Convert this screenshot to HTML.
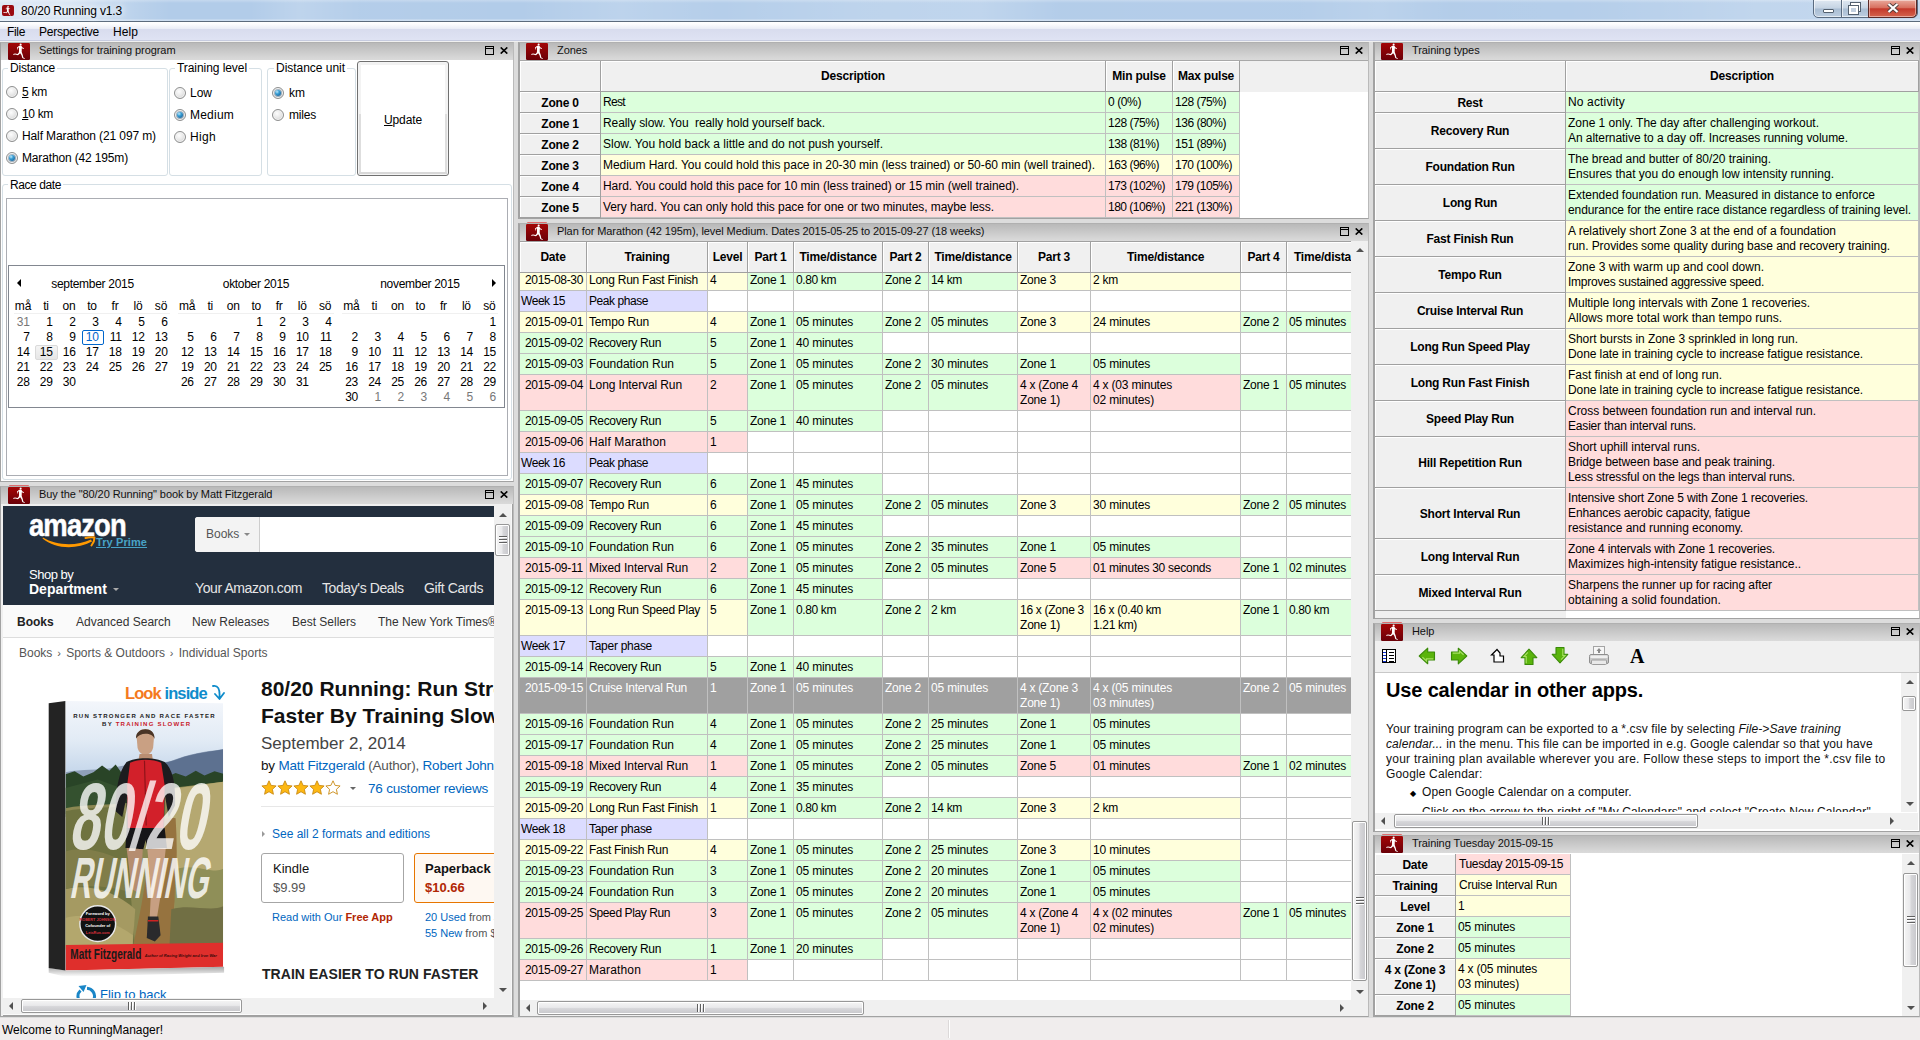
<!DOCTYPE html>
<html lang="en"><head><meta charset="utf-8"><title>80/20 Running v1.3</title>
<style>
*{box-sizing:border-box;margin:0;padding:0}
html,body{width:1920px;height:1040px;overflow:hidden}
body{position:relative;background:#dcdcdc;font-family:"Liberation Sans",sans-serif;font-size:12px;color:#000}
div,span,svg{position:absolute}
span{white-space:pre}
.s{font-size:12px;letter-spacing:-.12px}
.b{font-size:12px;font-weight:bold;letter-spacing:-.2px}
.a{font-size:11px;letter-spacing:-.08px;color:#111}
.pnl{background:#fff;border:1px solid #a2a2a2;border-top-color:#b0b0b0;border-right-color:#bababa;overflow:hidden}
.hd{left:0;top:0;right:0;height:17px;background:linear-gradient(#b9b9b9 0,#c3c3c3 30%,#d6d6d6 85%,#dadada 100%)}
.th{background:#f0f0f0;border-right:1px solid #a0a0a0;border-bottom:1px solid #a0a0a0;box-shadow:inset 1px 1px 0 #fff}
.c{border-right:1px solid #c0c0c0;border-bottom:1px solid #c0c0c0;background:#fff;overflow:hidden}
.G{background:#dcffdc}.Y{background:#ffffdc}.P{background:#ffdcdc}.L{background:#dcdcff}.W{background:#fff}
.X{background:#a0a0a0;color:#fff}
.ct{left:0;right:0;text-align:center}
.sb{background:#f0f0f0}
.thumb{border:1px solid #979797;border-radius:2px;background:linear-gradient(90deg,#f5f5f5 0,#e9e9eb 45%,#d6d6d9 55%,#c7c7cb 100%);box-shadow:inset 0 0 0 1px #fff}
.thumbh{border:1px solid #979797;border-radius:2px;background:linear-gradient(#f5f5f5 0,#e9e9eb 45%,#d6d6d9 55%,#c7c7cb 100%);box-shadow:inset 0 0 0 1px #fff}
.tri{width:0;height:0}
</style></head>
<body>
<div style="left:0px;top:0px;width:1920px;height:21px;background:#b2cce9"></div>
<div style="left:0px;top:0px;width:1920px;height:21px;background:linear-gradient(90deg,rgba(255,255,255,.55) 0,rgba(255,255,255,.5) 70px,rgba(255,255,255,.12) 135px,rgba(255,255,255,0) 170px,rgba(255,255,255,0) 250px,rgba(255,255,255,.16) 300px,rgba(255,255,255,.03) 360px,rgba(255,255,255,0) 520px,rgba(255,255,255,.14) 620px,rgba(255,255,255,.04) 720px,rgba(255,255,255,.15) 860px,rgba(255,255,255,.18) 980px,rgba(255,255,255,.02) 1060px,rgba(255,255,255,.03) 1300px,rgba(255,255,255,.12) 1380px,rgba(255,255,255,.02) 1450px,rgba(255,255,255,.05) 1600px,rgba(255,255,255,.2) 1760px,rgba(255,255,255,.22) 1920px)"></div>
<div style="left:0px;top:0px;width:1920px;height:3px;background:linear-gradient(rgba(255,255,255,.25),rgba(255,255,255,0))"></div>
<div style="left:0px;top:19px;width:1920px;height:2px;background:linear-gradient(rgba(255,255,255,.15),rgba(255,255,255,.4))"></div>
<div style="left:0px;top:21px;width:1920px;height:1px;background:#5c6b7c"></div><svg style="left:2px;top:5px" width="12" height="11" viewBox="0 0 12 11"><rect width="12" height="11" rx="2" fill="#9a0a10"/><g transform="translate(-1.800 .6) scale(.62)" fill="#fff"><circle cx="12.65" cy="1.5" r="1.2"/><path d="M12 2.500L10.600 3.200L9 4.600L9.300 6.600L9.900 6.500L9.800 5L10.900 4.200L11 8L10.800 9.400L9.600 11L7 10.400L5.200 10.900L5 11.600L5.800 11.800L7.200 11.400L10 12.200L12.200 10.200L13.500 12.200L14.300 14.900L16.600 15.900L16.800 15.200L15.300 14.400L14.800 12L13.700 9L13.800 5.200L15.800 5.900L16 5.200L14.200 4.200L13.600 3L13 2.500Z"/></g></svg><span class="s" style="left:21px;top:2.5px;line-height:16px;letter-spacing:-0.171px;text-shadow:0 0 6px #fff,0 0 10px #fff">80/20 Running v1.3</span>
<div style="left:1813px;top:-1px;width:105px;height:19px;border:1px solid #5a6b80;border-radius:0 0 5px 5px;background:linear-gradient(#dfe8f2 0,#c5d3e3 48%,#a9bdd3 52%,#bccde0 100%);box-shadow:inset 0 0 0 1px rgba(255,255,255,.6)"></div>
<div style="left:1841px;top:-1px;width:1px;height:18px;background:#5a6b80"></div>
<div style="left:1842px;top:0px;width:1px;height:17px;background:rgba(255,255,255,.6)"></div>
<div style="left:1868px;top:-1px;width:49px;height:19px;border:1px solid #5a2a28;border-radius:0 0 5px 0;background:linear-gradient(#e9a99c 0,#d8705f 45%,#c4392b 52%,#d4644e 100%);box-shadow:inset 0 0 0 1px rgba(255,255,255,.45)"></div>
<div style="left:1823px;top:9px;width:11px;height:4px;background:#fff;border:1px solid #53606f;border-radius:1px"></div>
<div style="left:1851px;top:3px;width:9px;height:8px;border:2px solid #fff;outline:1px solid #53606f;background:transparent"></div>
<div style="left:1849px;top:6px;width:9px;height:8px;border:2px solid #fff;outline:1px solid #53606f;background:#c3d0e0"></div><svg style="left:1887px;top:3px" width="12" height="10" viewBox="0 0 12 10"><path d="M1.500 1L10.500 9M10.500 1L1.500 9" stroke="#53413f" stroke-width="4" fill="none"/><path d="M1.500 1L10.500 9M10.500 1L1.500 9" stroke="#fff" stroke-width="2.200" fill="none"/></svg>
<div style="left:0px;top:22px;width:1920px;height:7px;background:linear-gradient(#fff 0,#fdfdfe 25%,#e9ecf6 100%)"></div>
<div style="left:0px;top:29px;width:1920px;height:11px;background:linear-gradient(#d8dcee,#dfe3f3)"></div>
<div style="left:0px;top:40px;width:1920px;height:1px;background:#c6cbdf"></div>
<div style="left:0px;top:41px;width:1920px;height:1px;background:#f0f0f0"></div><span class="s" style="left:7px;top:24px;line-height:16px;letter-spacing:-0.334px;">File</span><span class="s" style="left:39px;top:24px;line-height:16px;letter-spacing:-0.245px;">Perspective</span><span class="s" style="left:113px;top:24px;line-height:16px;letter-spacing:0.08px;">Help</span>
<div style="left:0px;top:1018px;width:1920px;height:22px;background:#f0eded"></div><span class="s" style="left:2px;top:1022px;line-height:16px;letter-spacing:-0.033px;">Welcome to RunningManager!</span>
<div style="left:948px;top:1020px;width:1px;height:18px;background:#dcd9d9"></div>
<div style="left:949px;top:1020px;width:1px;height:18px;background:#fff"></div>
<div class="pnl" style="left:0px;top:42px;width:514px;height:440px;border-left-width:1px">
<div class="hd"></div>
<div style="left:484px;top:3px;width:9px;height:9px;border:1px solid #000"></div>
<div style="left:484px;top:5px;width:9px;height:1px;background:#000"></div><svg style="left:499px;top:4px" width="8" height="7" viewBox="0 0 8 7"><path d="M.7 .4L7.3 6.6M7.3 .4L.7 6.6" stroke="#000" stroke-width="1.6" fill="none"/></svg><span class="a" style="left:38px;top:-1px;line-height:16px;">Settings for training program</span>
<div style="left:-1px;top:-43px;width:1920px;height:1040px">
<div style="left:2px;top:68px;width:166px;height:108px;border:1px solid #d5dfe5;border-radius:3px"></div><span class="s" style="left:10px;top:60px;line-height:16px;letter-spacing:-0.211px;background:linear-gradient(transparent 7px,#fff 7px,#fff 10px,transparent 10px);padding:0 2px;margin-left:-2px">Distance</span>
<div style="left:169px;top:68px;width:93px;height:108px;border:1px solid #d5dfe5;border-radius:3px"></div><span class="s" style="left:177px;top:60px;line-height:16px;letter-spacing:-0.066px;background:linear-gradient(transparent 7px,#fff 7px,#fff 10px,transparent 10px);padding:0 2px;margin-left:-2px">Training level</span>
<div style="left:267px;top:68px;width:89px;height:108px;border:1px solid #d5dfe5;border-radius:3px"></div><span class="s" style="left:276px;top:60px;line-height:16px;letter-spacing:-0.028px;background:linear-gradient(transparent 7px,#fff 7px,#fff 10px,transparent 10px);padding:0 2px;margin-left:-2px">Distance unit</span>
<div style="left:6px;top:86px;width:12px;height:12px;border-radius:50%;border:1px solid #8e8f8f;background:radial-gradient(circle at 40% 35%,#fdfdfd 0,#e9e9e9 45%,#c9c9c9 100%);box-shadow:inset 0 0 0 1px #f4f4f4"></div><span class="s" style="left:22px;top:84px;line-height:16px;letter-spacing:-0.251px;"><u>5</u> km</span>
<div style="left:6px;top:108px;width:12px;height:12px;border-radius:50%;border:1px solid #8e8f8f;background:radial-gradient(circle at 40% 35%,#fdfdfd 0,#e9e9e9 45%,#c9c9c9 100%);box-shadow:inset 0 0 0 1px #f4f4f4"></div><span class="s" style="left:22px;top:106px;line-height:16px;letter-spacing:-0.336px;"><u>1</u>0 km</span>
<div style="left:6px;top:130px;width:12px;height:12px;border-radius:50%;border:1px solid #8e8f8f;background:radial-gradient(circle at 40% 35%,#fdfdfd 0,#e9e9e9 45%,#c9c9c9 100%);box-shadow:inset 0 0 0 1px #f4f4f4"></div><span class="s" style="left:22px;top:128px;line-height:16px;letter-spacing:-0.114px;">Half Marathon (21 097 m)</span>
<div style="left:6px;top:152px;width:12px;height:12px;border-radius:50%;border:1px solid #8e8f8f;background:radial-gradient(circle at 40% 35%,#fdfdfd 0,#e9e9e9 45%,#c9c9c9 100%);box-shadow:inset 0 0 0 1px #f4f4f4"></div>
<div style="left:9px;top:155px;width:6px;height:6px;border-radius:50%;background:radial-gradient(circle at 35% 30%,#bfe9fb 0,#3aa0d6 35%,#0f4f86 100%);box-shadow:0 0 0 1px rgba(20,70,110,.35)"></div><span class="s" style="left:22px;top:150px;line-height:16px;letter-spacing:-0.151px;">Marathon (42 195m)</span>
<div style="left:174px;top:87px;width:12px;height:12px;border-radius:50%;border:1px solid #8e8f8f;background:radial-gradient(circle at 40% 35%,#fdfdfd 0,#e9e9e9 45%,#c9c9c9 100%);box-shadow:inset 0 0 0 1px #f4f4f4"></div><span class="s" style="left:190px;top:85px;line-height:16px;letter-spacing:-0.004px;">Low</span>
<div style="left:174px;top:109px;width:12px;height:12px;border-radius:50%;border:1px solid #8e8f8f;background:radial-gradient(circle at 40% 35%,#fdfdfd 0,#e9e9e9 45%,#c9c9c9 100%);box-shadow:inset 0 0 0 1px #f4f4f4"></div>
<div style="left:177px;top:112px;width:6px;height:6px;border-radius:50%;background:radial-gradient(circle at 35% 30%,#bfe9fb 0,#3aa0d6 35%,#0f4f86 100%);box-shadow:0 0 0 1px rgba(20,70,110,.35)"></div><span class="s" style="left:190px;top:107px;line-height:16px;letter-spacing:0.22px;">Medium</span>
<div style="left:174px;top:131px;width:12px;height:12px;border-radius:50%;border:1px solid #8e8f8f;background:radial-gradient(circle at 40% 35%,#fdfdfd 0,#e9e9e9 45%,#c9c9c9 100%);box-shadow:inset 0 0 0 1px #f4f4f4"></div><span class="s" style="left:190px;top:129px;line-height:16px;letter-spacing:0.33px;">High</span>
<div style="left:272px;top:87px;width:12px;height:12px;border-radius:50%;border:1px solid #8e8f8f;background:radial-gradient(circle at 40% 35%,#fdfdfd 0,#e9e9e9 45%,#c9c9c9 100%);box-shadow:inset 0 0 0 1px #f4f4f4"></div>
<div style="left:275px;top:90px;width:6px;height:6px;border-radius:50%;background:radial-gradient(circle at 35% 30%,#bfe9fb 0,#3aa0d6 35%,#0f4f86 100%);box-shadow:0 0 0 1px rgba(20,70,110,.35)"></div><span class="s" style="left:289px;top:85px;line-height:16px;letter-spacing:0.002px;">km</span>
<div style="left:272px;top:109px;width:12px;height:12px;border-radius:50%;border:1px solid #8e8f8f;background:radial-gradient(circle at 40% 35%,#fdfdfd 0,#e9e9e9 45%,#c9c9c9 100%);box-shadow:inset 0 0 0 1px #f4f4f4"></div><span class="s" style="left:289px;top:107px;line-height:16px;letter-spacing:-0.2px;">miles</span>
<div style="left:357px;top:61px;width:92px;height:115px;border:1px solid #707070;border-radius:3px;background:#fff;box-shadow:inset 0 0 0 1px #f4f4f4"></div>
<div style="left:359px;top:114px;width:2px;height:60px;background:#dedede"></div>
<div style="left:445px;top:114px;width:2px;height:60px;background:#dedede"></div>
<div style="left:359px;top:172px;width:88px;height:2px;background:#d8d8d8"></div>
<div style="left:359px;top:63px;width:88px;height:2px;background:#f2f2f2"></div>
<div style="left:359px;top:65px;width:2px;height:49px;background:#f3f3f3"></div>
<div style="left:445px;top:65px;width:2px;height:49px;background:#f3f3f3"></div><span class="s" style="left:384px;top:111.5px;line-height:16px;letter-spacing:-0.116px;"><u>U</u>pdate</span>
<div style="left:2px;top:184px;width:510px;height:296px;border:1px solid #d5dfe5;border-radius:3px"></div><span class="s" style="left:10px;top:177px;line-height:16px;letter-spacing:-0.411px;background:linear-gradient(transparent 7px,#fff 7px,#fff 10px,transparent 10px);padding:0 2px;margin-left:-2px">Race date</span>
<div style="left:6px;top:198px;width:502px;height:278px;border:1px solid #abadb3;background:#fff"></div>
<div style="left:8px;top:265px;width:497px;height:143px;border:1px solid #828790;background:#fff"></div>
<div class="tri" style="left:17.0px;top:279px;border-top:4px solid transparent;border-bottom:4px solid transparent;border-right:4px solid #000"></div>
<div class="tri" style="left:492.0px;top:279px;border-top:4px solid transparent;border-bottom:4px solid transparent;border-left:4px solid #000"></div><span class="s" style="left:32.5px;top:276px;width:120px;text-align:center;line-height:16px;letter-spacing:-.3px">september 2015</span>
<div style="left:13.5px;top:313px;width:156px;height:1px;background:#f0f0f0"></div><span class="s" style="left:11.5px;top:298px;width:23px;text-align:center;line-height:16px;letter-spacing:-.2px">må</span><span class="s" style="left:34.5px;top:298px;width:23px;text-align:center;line-height:16px;letter-spacing:-.2px">ti</span><span class="s" style="left:57.5px;top:298px;width:23px;text-align:center;line-height:16px;letter-spacing:-.2px">on</span><span class="s" style="left:80.5px;top:298px;width:23px;text-align:center;line-height:16px;letter-spacing:-.2px">to</span><span class="s" style="left:103.5px;top:298px;width:23px;text-align:center;line-height:16px;letter-spacing:-.2px">fr</span><span class="s" style="left:126.5px;top:298px;width:23px;text-align:center;line-height:16px;letter-spacing:-.2px">lö</span><span class="s" style="left:149.5px;top:298px;width:23px;text-align:center;line-height:16px;letter-spacing:-.2px">sö</span><span class="s" style="left:6.5px;top:314px;width:23px;text-align:right;line-height:16px;letter-spacing:-.35px;color:#777">31</span><span class="s" style="left:29.5px;top:314px;width:23px;text-align:right;line-height:16px;letter-spacing:-.35px;color:#000">1</span><span class="s" style="left:52.5px;top:314px;width:23px;text-align:right;line-height:16px;letter-spacing:-.35px;color:#000">2</span><span class="s" style="left:75.5px;top:314px;width:23px;text-align:right;line-height:16px;letter-spacing:-.35px;color:#000">3</span><span class="s" style="left:98.5px;top:314px;width:23px;text-align:right;line-height:16px;letter-spacing:-.35px;color:#000">4</span><span class="s" style="left:121.5px;top:314px;width:23px;text-align:right;line-height:16px;letter-spacing:-.35px;color:#000">5</span><span class="s" style="left:144.5px;top:314px;width:23px;text-align:right;line-height:16px;letter-spacing:-.35px;color:#000">6</span><span class="s" style="left:6.5px;top:329px;width:23px;text-align:right;line-height:16px;letter-spacing:-.35px;color:#000">7</span><span class="s" style="left:29.5px;top:329px;width:23px;text-align:right;line-height:16px;letter-spacing:-.35px;color:#000">8</span><span class="s" style="left:52.5px;top:329px;width:23px;text-align:right;line-height:16px;letter-spacing:-.35px;color:#000">9</span>
<div style="left:81.5px;top:329.5px;width:22px;height:15px;border:1px solid #0066cc;border-radius:2px"></div><span class="s" style="left:75.5px;top:329px;width:23px;text-align:right;line-height:16px;letter-spacing:-.35px;color:#0066cc">10</span><span class="s" style="left:98.5px;top:329px;width:23px;text-align:right;line-height:16px;letter-spacing:-.35px;color:#000">11</span><span class="s" style="left:121.5px;top:329px;width:23px;text-align:right;line-height:16px;letter-spacing:-.35px;color:#000">12</span><span class="s" style="left:144.5px;top:329px;width:23px;text-align:right;line-height:16px;letter-spacing:-.35px;color:#000">13</span><span class="s" style="left:6.5px;top:344px;width:23px;text-align:right;line-height:16px;letter-spacing:-.35px;color:#000">14</span>
<div style="left:34.5px;top:344.5px;width:23px;height:15px;border:1px solid #dadada;border-radius:2px;background:linear-gradient(#f4f4f4,#e6e6e6)"></div><span class="s" style="left:29.5px;top:344px;width:23px;text-align:right;line-height:16px;letter-spacing:-.35px;color:#000">15</span><span class="s" style="left:52.5px;top:344px;width:23px;text-align:right;line-height:16px;letter-spacing:-.35px;color:#000">16</span><span class="s" style="left:75.5px;top:344px;width:23px;text-align:right;line-height:16px;letter-spacing:-.35px;color:#000">17</span><span class="s" style="left:98.5px;top:344px;width:23px;text-align:right;line-height:16px;letter-spacing:-.35px;color:#000">18</span><span class="s" style="left:121.5px;top:344px;width:23px;text-align:right;line-height:16px;letter-spacing:-.35px;color:#000">19</span><span class="s" style="left:144.5px;top:344px;width:23px;text-align:right;line-height:16px;letter-spacing:-.35px;color:#000">20</span><span class="s" style="left:6.5px;top:359px;width:23px;text-align:right;line-height:16px;letter-spacing:-.35px;color:#000">21</span><span class="s" style="left:29.5px;top:359px;width:23px;text-align:right;line-height:16px;letter-spacing:-.35px;color:#000">22</span><span class="s" style="left:52.5px;top:359px;width:23px;text-align:right;line-height:16px;letter-spacing:-.35px;color:#000">23</span><span class="s" style="left:75.5px;top:359px;width:23px;text-align:right;line-height:16px;letter-spacing:-.35px;color:#000">24</span><span class="s" style="left:98.5px;top:359px;width:23px;text-align:right;line-height:16px;letter-spacing:-.35px;color:#000">25</span><span class="s" style="left:121.5px;top:359px;width:23px;text-align:right;line-height:16px;letter-spacing:-.35px;color:#000">26</span><span class="s" style="left:144.5px;top:359px;width:23px;text-align:right;line-height:16px;letter-spacing:-.35px;color:#000">27</span><span class="s" style="left:6.5px;top:374px;width:23px;text-align:right;line-height:16px;letter-spacing:-.35px;color:#000">28</span><span class="s" style="left:29.5px;top:374px;width:23px;text-align:right;line-height:16px;letter-spacing:-.35px;color:#000">29</span><span class="s" style="left:52.5px;top:374px;width:23px;text-align:right;line-height:16px;letter-spacing:-.35px;color:#000">30</span><span class="s" style="left:196px;top:276px;width:120px;text-align:center;line-height:16px;letter-spacing:-.3px">oktober 2015</span>
<div style="left:177.7px;top:313px;width:156px;height:1px;background:#f0f0f0"></div><span class="s" style="left:175.7px;top:298px;width:23px;text-align:center;line-height:16px;letter-spacing:-.2px">må</span><span class="s" style="left:198.7px;top:298px;width:23px;text-align:center;line-height:16px;letter-spacing:-.2px">ti</span><span class="s" style="left:221.7px;top:298px;width:23px;text-align:center;line-height:16px;letter-spacing:-.2px">on</span><span class="s" style="left:244.7px;top:298px;width:23px;text-align:center;line-height:16px;letter-spacing:-.2px">to</span><span class="s" style="left:267.7px;top:298px;width:23px;text-align:center;line-height:16px;letter-spacing:-.2px">fr</span><span class="s" style="left:290.7px;top:298px;width:23px;text-align:center;line-height:16px;letter-spacing:-.2px">lö</span><span class="s" style="left:313.7px;top:298px;width:23px;text-align:center;line-height:16px;letter-spacing:-.2px">sö</span><span class="s" style="left:239.7px;top:314px;width:23px;text-align:right;line-height:16px;letter-spacing:-.35px;color:#000">1</span><span class="s" style="left:262.7px;top:314px;width:23px;text-align:right;line-height:16px;letter-spacing:-.35px;color:#000">2</span><span class="s" style="left:285.7px;top:314px;width:23px;text-align:right;line-height:16px;letter-spacing:-.35px;color:#000">3</span><span class="s" style="left:308.7px;top:314px;width:23px;text-align:right;line-height:16px;letter-spacing:-.35px;color:#000">4</span><span class="s" style="left:170.7px;top:329px;width:23px;text-align:right;line-height:16px;letter-spacing:-.35px;color:#000">5</span><span class="s" style="left:193.7px;top:329px;width:23px;text-align:right;line-height:16px;letter-spacing:-.35px;color:#000">6</span><span class="s" style="left:216.7px;top:329px;width:23px;text-align:right;line-height:16px;letter-spacing:-.35px;color:#000">7</span><span class="s" style="left:239.7px;top:329px;width:23px;text-align:right;line-height:16px;letter-spacing:-.35px;color:#000">8</span><span class="s" style="left:262.7px;top:329px;width:23px;text-align:right;line-height:16px;letter-spacing:-.35px;color:#000">9</span><span class="s" style="left:285.7px;top:329px;width:23px;text-align:right;line-height:16px;letter-spacing:-.35px;color:#000">10</span><span class="s" style="left:308.7px;top:329px;width:23px;text-align:right;line-height:16px;letter-spacing:-.35px;color:#000">11</span><span class="s" style="left:170.7px;top:344px;width:23px;text-align:right;line-height:16px;letter-spacing:-.35px;color:#000">12</span><span class="s" style="left:193.7px;top:344px;width:23px;text-align:right;line-height:16px;letter-spacing:-.35px;color:#000">13</span><span class="s" style="left:216.7px;top:344px;width:23px;text-align:right;line-height:16px;letter-spacing:-.35px;color:#000">14</span><span class="s" style="left:239.7px;top:344px;width:23px;text-align:right;line-height:16px;letter-spacing:-.35px;color:#000">15</span><span class="s" style="left:262.7px;top:344px;width:23px;text-align:right;line-height:16px;letter-spacing:-.35px;color:#000">16</span><span class="s" style="left:285.7px;top:344px;width:23px;text-align:right;line-height:16px;letter-spacing:-.35px;color:#000">17</span><span class="s" style="left:308.7px;top:344px;width:23px;text-align:right;line-height:16px;letter-spacing:-.35px;color:#000">18</span><span class="s" style="left:170.7px;top:359px;width:23px;text-align:right;line-height:16px;letter-spacing:-.35px;color:#000">19</span><span class="s" style="left:193.7px;top:359px;width:23px;text-align:right;line-height:16px;letter-spacing:-.35px;color:#000">20</span><span class="s" style="left:216.7px;top:359px;width:23px;text-align:right;line-height:16px;letter-spacing:-.35px;color:#000">21</span><span class="s" style="left:239.7px;top:359px;width:23px;text-align:right;line-height:16px;letter-spacing:-.35px;color:#000">22</span><span class="s" style="left:262.7px;top:359px;width:23px;text-align:right;line-height:16px;letter-spacing:-.35px;color:#000">23</span><span class="s" style="left:285.7px;top:359px;width:23px;text-align:right;line-height:16px;letter-spacing:-.35px;color:#000">24</span><span class="s" style="left:308.7px;top:359px;width:23px;text-align:right;line-height:16px;letter-spacing:-.35px;color:#000">25</span><span class="s" style="left:170.7px;top:374px;width:23px;text-align:right;line-height:16px;letter-spacing:-.35px;color:#000">26</span><span class="s" style="left:193.7px;top:374px;width:23px;text-align:right;line-height:16px;letter-spacing:-.35px;color:#000">27</span><span class="s" style="left:216.7px;top:374px;width:23px;text-align:right;line-height:16px;letter-spacing:-.35px;color:#000">28</span><span class="s" style="left:239.7px;top:374px;width:23px;text-align:right;line-height:16px;letter-spacing:-.35px;color:#000">29</span><span class="s" style="left:262.7px;top:374px;width:23px;text-align:right;line-height:16px;letter-spacing:-.35px;color:#000">30</span><span class="s" style="left:285.7px;top:374px;width:23px;text-align:right;line-height:16px;letter-spacing:-.35px;color:#000">31</span><span class="s" style="left:360px;top:276px;width:120px;text-align:center;line-height:16px;letter-spacing:-.3px">november 2015</span>
<div style="left:341.9px;top:313px;width:156px;height:1px;background:#f0f0f0"></div><span class="s" style="left:339.9px;top:298px;width:23px;text-align:center;line-height:16px;letter-spacing:-.2px">må</span><span class="s" style="left:362.9px;top:298px;width:23px;text-align:center;line-height:16px;letter-spacing:-.2px">ti</span><span class="s" style="left:385.9px;top:298px;width:23px;text-align:center;line-height:16px;letter-spacing:-.2px">on</span><span class="s" style="left:408.9px;top:298px;width:23px;text-align:center;line-height:16px;letter-spacing:-.2px">to</span><span class="s" style="left:431.9px;top:298px;width:23px;text-align:center;line-height:16px;letter-spacing:-.2px">fr</span><span class="s" style="left:454.9px;top:298px;width:23px;text-align:center;line-height:16px;letter-spacing:-.2px">lö</span><span class="s" style="left:477.9px;top:298px;width:23px;text-align:center;line-height:16px;letter-spacing:-.2px">sö</span><span class="s" style="left:472.9px;top:314px;width:23px;text-align:right;line-height:16px;letter-spacing:-.35px;color:#000">1</span><span class="s" style="left:334.9px;top:329px;width:23px;text-align:right;line-height:16px;letter-spacing:-.35px;color:#000">2</span><span class="s" style="left:357.9px;top:329px;width:23px;text-align:right;line-height:16px;letter-spacing:-.35px;color:#000">3</span><span class="s" style="left:380.9px;top:329px;width:23px;text-align:right;line-height:16px;letter-spacing:-.35px;color:#000">4</span><span class="s" style="left:403.9px;top:329px;width:23px;text-align:right;line-height:16px;letter-spacing:-.35px;color:#000">5</span><span class="s" style="left:426.9px;top:329px;width:23px;text-align:right;line-height:16px;letter-spacing:-.35px;color:#000">6</span><span class="s" style="left:449.9px;top:329px;width:23px;text-align:right;line-height:16px;letter-spacing:-.35px;color:#000">7</span><span class="s" style="left:472.9px;top:329px;width:23px;text-align:right;line-height:16px;letter-spacing:-.35px;color:#000">8</span><span class="s" style="left:334.9px;top:344px;width:23px;text-align:right;line-height:16px;letter-spacing:-.35px;color:#000">9</span><span class="s" style="left:357.9px;top:344px;width:23px;text-align:right;line-height:16px;letter-spacing:-.35px;color:#000">10</span><span class="s" style="left:380.9px;top:344px;width:23px;text-align:right;line-height:16px;letter-spacing:-.35px;color:#000">11</span><span class="s" style="left:403.9px;top:344px;width:23px;text-align:right;line-height:16px;letter-spacing:-.35px;color:#000">12</span><span class="s" style="left:426.9px;top:344px;width:23px;text-align:right;line-height:16px;letter-spacing:-.35px;color:#000">13</span><span class="s" style="left:449.9px;top:344px;width:23px;text-align:right;line-height:16px;letter-spacing:-.35px;color:#000">14</span><span class="s" style="left:472.9px;top:344px;width:23px;text-align:right;line-height:16px;letter-spacing:-.35px;color:#000">15</span><span class="s" style="left:334.9px;top:359px;width:23px;text-align:right;line-height:16px;letter-spacing:-.35px;color:#000">16</span><span class="s" style="left:357.9px;top:359px;width:23px;text-align:right;line-height:16px;letter-spacing:-.35px;color:#000">17</span><span class="s" style="left:380.9px;top:359px;width:23px;text-align:right;line-height:16px;letter-spacing:-.35px;color:#000">18</span><span class="s" style="left:403.9px;top:359px;width:23px;text-align:right;line-height:16px;letter-spacing:-.35px;color:#000">19</span><span class="s" style="left:426.9px;top:359px;width:23px;text-align:right;line-height:16px;letter-spacing:-.35px;color:#000">20</span><span class="s" style="left:449.9px;top:359px;width:23px;text-align:right;line-height:16px;letter-spacing:-.35px;color:#000">21</span><span class="s" style="left:472.9px;top:359px;width:23px;text-align:right;line-height:16px;letter-spacing:-.35px;color:#000">22</span><span class="s" style="left:334.9px;top:374px;width:23px;text-align:right;line-height:16px;letter-spacing:-.35px;color:#000">23</span><span class="s" style="left:357.9px;top:374px;width:23px;text-align:right;line-height:16px;letter-spacing:-.35px;color:#000">24</span><span class="s" style="left:380.9px;top:374px;width:23px;text-align:right;line-height:16px;letter-spacing:-.35px;color:#000">25</span><span class="s" style="left:403.9px;top:374px;width:23px;text-align:right;line-height:16px;letter-spacing:-.35px;color:#000">26</span><span class="s" style="left:426.9px;top:374px;width:23px;text-align:right;line-height:16px;letter-spacing:-.35px;color:#000">27</span><span class="s" style="left:449.9px;top:374px;width:23px;text-align:right;line-height:16px;letter-spacing:-.35px;color:#000">28</span><span class="s" style="left:472.9px;top:374px;width:23px;text-align:right;line-height:16px;letter-spacing:-.35px;color:#000">29</span><span class="s" style="left:334.9px;top:389px;width:23px;text-align:right;line-height:16px;letter-spacing:-.35px;color:#000">30</span><span class="s" style="left:357.9px;top:389px;width:23px;text-align:right;line-height:16px;letter-spacing:-.35px;color:#777">1</span><span class="s" style="left:380.9px;top:389px;width:23px;text-align:right;line-height:16px;letter-spacing:-.35px;color:#777">2</span><span class="s" style="left:403.9px;top:389px;width:23px;text-align:right;line-height:16px;letter-spacing:-.35px;color:#777">3</span><span class="s" style="left:426.9px;top:389px;width:23px;text-align:right;line-height:16px;letter-spacing:-.35px;color:#777">4</span><span class="s" style="left:449.9px;top:389px;width:23px;text-align:right;line-height:16px;letter-spacing:-.35px;color:#777">5</span><span class="s" style="left:472.9px;top:389px;width:23px;text-align:right;line-height:16px;letter-spacing:-.35px;color:#777">6</span></div></div><svg viewBox="0 0 22 17" preserveAspectRatio="none" width="22" height="17" style="position:absolute;left:8px;top:43px"><defs><linearGradient id="rg1" x1="0" y1="0" x2="0" y2="1"><stop offset="0" stop-color="#a30606"/><stop offset="1" stop-color="#6a0008"/></linearGradient></defs><rect width="22" height="17" rx="1.2" fill="url(#rg1)"/><g fill="#fff"><circle cx="12.65" cy="1.5" r="1.05"/><path d="M12 2.500L10.600 3.200L9 4.600L9.300 6.600L9.900 6.500L9.800 5L10.900 4.200L11 8L10.800 9.400L9.600 11L7 10.400L5.200 10.900L5 11.600L5.800 11.800L7.200 11.400L10 12.200L12.200 10.200L13.500 12.200L14.300 14.900L16.600 15.900L16.800 15.200L15.300 14.400L14.800 12L13.700 9L13.800 5.200L15.800 5.900L16 5.200L14.200 4.200L13.600 3L13 2.500Z"/></g></svg>
<div class="pnl" style="left:0px;top:486px;width:514px;height:531px;border-left-width:1px">
<div class="hd"></div>
<div style="left:484px;top:3px;width:9px;height:9px;border:1px solid #000"></div>
<div style="left:484px;top:5px;width:9px;height:1px;background:#000"></div><svg style="left:499px;top:4px" width="8" height="7" viewBox="0 0 8 7"><path d="M.7 .4L7.3 6.6M7.3 .4L.7 6.6" stroke="#000" stroke-width="1.6" fill="none"/></svg><span class="a" style="left:38px;top:-1px;line-height:16px;">Buy the "80/20 Running" book by Matt Fitzgerald</span>
<div style="left:-1px;top:-487px;width:1920px;height:1040px">
<div style="left:3px;top:506px;width:491px;height:492px;overflow:hidden;background:#fff">
<div style="left:-3px;top:-506px;width:1920px;height:1040px">
<div style="left:3px;top:506px;width:491px;height:99px;background:#232f3e"></div><span style="left:29px;top:509px;font:bold 31px/34px 'Liberation Sans',sans-serif;color:#fff;letter-spacing:-1px;-webkit-text-stroke:.5px #fff;transform:scale(.885,1);transform-origin:0 0">amazon</span><svg style="left:42px;top:536px" width="56" height="13" viewBox="0 0 56 13"><path d="M1 1.500 C14 9.500 34 10.500 49 3.500 L50 5.500 C34 14 13 13 .5 2.500Z" fill="#ff9900"/><path d="M43.500 2 C47 1 50 1 52.500 1.500 C52.500 4 51.500 7 49.500 9.500" stroke="#ff9900" stroke-width="2" fill="none" stroke-linejoin="round" stroke-linecap="round"/></svg><span style="left:96px;top:535px;font:bold 11px/14px 'Liberation Sans',sans-serif;color:#48a3c6;text-decoration:underline;letter-spacing:.1px">Try Prime</span>
<div style="left:195px;top:517px;width:299px;height:35px;background:#fff;border-radius:3px 0 0 3px"></div>
<div style="left:195px;top:517px;width:65px;height:35px;background:#f3f3f3;border-right:1px solid #cdcdcd;border-radius:3px 0 0 3px"></div><span style="left:206px;top:527px;font:12px/14px 'Liberation Sans',sans-serif;color:#555">Books</span>
<div class="tri" style="left:244.0px;top:533.25px;border-left:3.5px solid transparent;border-right:3.5px solid transparent;border-top:3.5px solid #888"></div><span style="left:29px;top:567px;font:13px/15px 'Liberation Sans',sans-serif;color:#fff;letter-spacing:-.5px">Shop by</span><span style="left:29px;top:581px;font:bold 14px/16px 'Liberation Sans',sans-serif;color:#fff;letter-spacing:0">Department</span>
<div class="tri" style="left:112.5px;top:588.25px;border-left:3.5px solid transparent;border-right:3.5px solid transparent;border-top:3.5px solid #aaa"></div><span style="left:195px;top:580px;font:14px/16px 'Liberation Sans',sans-serif;color:#e6e6e6;letter-spacing:-.4px">Your Amazon.com</span><span style="left:322px;top:580px;font:14px/16px 'Liberation Sans',sans-serif;color:#e6e6e6;letter-spacing:-.4px">Today's Deals</span><span style="left:424px;top:580px;font:14px/16px 'Liberation Sans',sans-serif;color:#e6e6e6;letter-spacing:-.4px">Gift Cards</span>
<div style="left:3px;top:605px;width:491px;height:33px;background:#fafafa;border-bottom:1px solid #ddd"></div><span style="left:17px;top:614px;font:bold 12px/16px 'Liberation Sans',sans-serif;color:#222">Books</span><span style="left:76px;top:614px;font:12px/16px 'Liberation Sans',sans-serif;color:#333">Advanced Search</span><span style="left:192px;top:614px;font:12px/16px 'Liberation Sans',sans-serif;color:#333">New Releases</span><span style="left:292px;top:614px;font:12px/16px 'Liberation Sans',sans-serif;color:#333">Best Sellers</span><span style="left:378px;top:614px;font:12px/16px 'Liberation Sans',sans-serif;color:#333">The New York Times®</span><span style="left:19px;top:645px;font:12px/16px 'Liberation Sans',sans-serif;color:#555">Books <i style="font-style:normal;font-size:11px;margin:0 2px 0 1.500px">›</i> Sports &amp; Outdoors <i style="font-style:normal;font-size:11px;margin:0 2px 0 1.500px">›</i> Individual Sports</span><span style="left:125px;top:684px;font:bold 16.500px/18px 'Liberation Sans',sans-serif;letter-spacing:-.9px;color:#f47a20">Look <b style="color:#0f8ccb">inside</b></span><svg style="left:212px;top:684px" width="13" height="17" viewBox="0 0 13 17"><path d="M1 2 C6 1 8 5 7.500 13 M3 10 L7.500 15 L12 9" stroke="#0f8ccb" stroke-width="1.800" fill="none" stroke-linecap="round" stroke-linejoin="round"/></svg><svg style="left:40px;top:690px" width="200" height="300" viewBox="0 0 693 1040"><defs><linearGradient id="sky" x1="0" y1="0" x2="0" y2="1"><stop offset="0" stop-color="#f3f6fb"/><stop offset=".45" stop-color="#e2ebf5"/><stop offset="1" stop-color="#b9cee6"/></linearGradient><linearGradient id="shd" x1="0" y1="0" x2="0" y2="1"><stop offset="0" stop-color="#000" stop-opacity=".35"/><stop offset="1" stop-color="#000" stop-opacity="0"/></linearGradient><clipPath id="fc"><path d="M88 38 L635 46 L635 959 L88 972Z"/></clipPath></defs><path d="M30 963 L88 972 L638 959 L638 980 L88 994 L30 980Z" fill="url(#shd)"/><path d="M30 46 L88 38 L88 972 L30 964Z" fill="#232323"/><g clip-path="url(#fc)"><rect x="88" y="38" width="547" height="300" fill="url(#sky)"/><path d="M88 285 C150 272 200 282 260 268 C330 250 420 262 470 240 C540 214 600 210 635 205 L635 330 L88 330Z" fill="#8fa0b9"/><path d="M330 275 C400 262 440 252 480 238 C540 216 600 212 635 205 L635 320 L330 320Z" fill="#5d7190"/><path d="M88 292 L120 282 L150 300 L185 285 L215 262 L240 280 L262 258 L285 290 L330 300 L420 310 L470 288 L505 300 L540 280 L570 296 L605 282 L635 290 L635 350 L440 352 L330 430 L88 440Z" fill="#294427"/><path d="M88 340 L200 310 L280 340 L300 420 L88 430Z" fill="#34512f"/><path d="M88 410 C160 395 240 400 300 392 C360 372 420 345 470 338 L635 318 L635 900 L88 900Z" fill="#8b8852"/><path d="M88 420 C160 405 230 410 290 402 L330 900 L88 900Z" fill="#6f7340"/><path d="M440 345 L635 318 L635 900 L450 900 C470 700 470 520 440 345Z" fill="#b5a871"/><path d="M380 470 C410 450 450 440 470 445 C480 600 470 760 450 900 L320 900 C350 760 380 620 380 470Z" fill="#96733f"/><path d="M88 690 C180 670 260 700 330 760 L320 900 L88 900Z" fill="#a59a62"/><path d="M470 620 C540 600 600 640 635 620 L635 760 C580 780 520 760 465 770Z" fill="#8f8f58"/><path d="M455 760 C520 740 590 770 635 750 L635 900 L448 900Z" fill="#716f44"/><path d="M88 560 C150 540 230 560 300 600 L310 700 C240 680 160 670 88 690Z" fill="#807d49"/><path d="M88 790 C160 770 250 800 322 850 L320 900 L88 900Z" fill="#b3a76d"/><path d="M335 165 C335 125 395 125 395 165 L392 200 C385 232 345 232 338 200Z" fill="#c9a083"/><path d="M333 168 C328 128 400 122 397 170 C390 146 345 146 333 168Z" fill="#4a3526"/><path d="M345 222 L388 222 L392 250 L340 250Z" fill="#b98e72"/><path d="M300 250 C330 232 400 232 432 250 C462 275 470 330 468 400 L446 440 L432 360 L430 480 L300 480 L300 370 L285 440 L262 420 C262 350 272 282 300 250Z" fill="#1c1c1f"/><path d="M312 252 C340 238 392 238 420 252 L432 330 L428 478 L304 478 L302 330Z" fill="#d2202a"/><path d="M362 245 L368 470" stroke="#8d1219" stroke-width="4" fill="none"/><path d="M300 478 L432 478 L440 548 L372 552 L366 520 L358 552 L296 548Z" fill="#161618"/><path d="M372 552 L436 548 L420 700 L405 790 L380 790 L385 690Z" fill="#c79f82"/><path d="M300 548 L356 552 L352 640 L335 700 L318 690Z" fill="#b58d70"/><path d="M374 785 L410 785 L418 850 L398 872 L370 860Z" fill="#2a2a2c"/><path d="M374 800 L410 800" stroke="#c22" stroke-width="5"/><text x="98" y="552" transform="translate(98 552) skewX(-11) translate(-98 -552)" font-family="'Liberation Sans',sans-serif" font-weight="bold" font-size="328" fill="#fff" fill-opacity=".78" textLength="470" lengthAdjust="spacingAndGlyphs">80/20</text><text x="100" y="722" transform="translate(100 722) skewX(-11) translate(-100 -722)" font-family="'Liberation Sans',sans-serif" font-weight="bold" font-size="202" fill="#fff" fill-opacity=".82" textLength="480" lengthAdjust="spacingAndGlyphs">RUNNING</text><text x="360" y="96" font-family="'Liberation Sans',sans-serif" font-weight="bold" font-size="21" fill="#222" text-anchor="middle" textLength="490" lengthAdjust="spacing">RUN STRONGER AND RACE FASTER</text><text x="215" y="126" font-family="'Liberation Sans',sans-serif" font-weight="bold" font-size="21" fill="#222" textLength="305" lengthAdjust="spacing">BY <tspan fill="#c8202c">TRAINING SLOWER</tspan></text><circle cx="200" cy="810" r="62" fill="#111" stroke="#e8e8e8" stroke-width="5"/><text x="200" y="780" font-family="'Liberation Sans',sans-serif" font-weight="bold" font-size="14" fill="#fff" text-anchor="middle">Foreword by</text><text x="200" y="801" font-family="'Liberation Sans',sans-serif" font-weight="bold" font-size="13" fill="#d8303a" text-anchor="middle">ROBERT JOHNSON,</text><text x="200" y="823" font-family="'Liberation Sans',sans-serif" font-weight="bold" font-size="14" fill="#fff" text-anchor="middle">Cofounder of</text><text x="200" y="845" font-family="'Liberation Sans',sans-serif" font-weight="bold" font-size="13" fill="#d8303a" text-anchor="middle">LetsRun.com</text><path d="M88 884 L635 876 L635 960 L88 973Z" fill="#df2f2c"/><text x="105" y="933" font-family="'Liberation Sans',sans-serif" font-weight="bold" font-size="50" fill="#1a1a1a" textLength="246" lengthAdjust="spacingAndGlyphs">Matt Fitzgerald</text><text x="363" y="925" font-family="'Liberation Sans',sans-serif" font-weight="bold" font-style="italic" font-size="15" fill="#3a0a0a" textLength="250" lengthAdjust="spacingAndGlyphs">Author of Racing Weight and Iron War</text></g></svg><span style="left:261px;top:675px;font:bold 21px/27px 'Liberation Sans',sans-serif;color:#111;letter-spacing:0">80/20 Running: Run Stronger and Race</span><span style="left:261px;top:702px;font:bold 21px/27px 'Liberation Sans',sans-serif;color:#111;letter-spacing:0">Faster By Training Slower</span><span style="left:261px;top:734px;font:17px/20px 'Liberation Sans',sans-serif;color:#444">September 2, 2014</span><span style="left:261px;top:757px;font:13.500px/18px 'Liberation Sans',sans-serif;color:#111;letter-spacing:-.2px">by <i style="font-style:normal;color:#0066c0">Matt Fitzgerald</i> <i style="font-style:normal;color:#555">(Author),</i> <i style="font-style:normal;color:#0066c0">Robert Johnson</i> (Foreword)</span><svg style="left:261px;top:780px" width="16" height="15" viewBox="0 0 16 15"><path d="M8 .8l2.100 4.600 5 .55-3.700 3.400 1 4.900L8 11.700l-4.400 2.550 1-4.900L.9 5.950l5-.55z" fill="#fdb813" stroke="#c98a14" stroke-width=".9" stroke-linejoin="round"/></svg><svg style="left:277px;top:780px" width="16" height="15" viewBox="0 0 16 15"><path d="M8 .8l2.100 4.600 5 .55-3.700 3.400 1 4.900L8 11.700l-4.400 2.550 1-4.900L.9 5.950l5-.55z" fill="#fdb813" stroke="#c98a14" stroke-width=".9" stroke-linejoin="round"/></svg><svg style="left:293px;top:780px" width="16" height="15" viewBox="0 0 16 15"><path d="M8 .8l2.100 4.600 5 .55-3.700 3.400 1 4.900L8 11.700l-4.400 2.550 1-4.900L.9 5.950l5-.55z" fill="#fdb813" stroke="#c98a14" stroke-width=".9" stroke-linejoin="round"/></svg><svg style="left:309px;top:780px" width="16" height="15" viewBox="0 0 16 15"><path d="M8 .8l2.100 4.600 5 .55-3.700 3.400 1 4.900L8 11.700l-4.400 2.550 1-4.900L.9 5.950l5-.55z" fill="#fdb813" stroke="#c98a14" stroke-width=".9" stroke-linejoin="round"/></svg><svg style="left:325px;top:780px" width="16" height="15" viewBox="0 0 16 15"><path d="M8 .8l2.100 4.600 5 .55-3.700 3.400 1 4.900L8 11.700l-4.400 2.550 1-4.900L.9 5.950l5-.55z" fill="#fff" stroke="#c98a14" stroke-width=".9" stroke-linejoin="round"/></svg>
<div class="tri" style="left:350.0px;top:786.75px;border-left:3.5px solid transparent;border-right:3.5px solid transparent;border-top:3.5px solid #666"></div><span style="left:368px;top:780px;font:13.500px/18px 'Liberation Sans',sans-serif;color:#0066c0;letter-spacing:-.2px">76 customer reviews</span>
<div style="left:261px;top:806px;width:240px;height:1px;background:#e7e7e7"></div>
<div class="tri" style="left:262.0px;top:830.5px;border-top:3px solid transparent;border-bottom:3px solid transparent;border-left:3px solid #999"></div><span style="left:272px;top:826px;font:12px/16px 'Liberation Sans',sans-serif;color:#0066c0">See all 2 formats and editions</span>
<div style="left:261px;top:853px;width:143px;height:50px;border:1px solid #a6a6a6;border-radius:3px;background:#fff"></div><span style="left:273px;top:860px;font:13px/18px 'Liberation Sans',sans-serif;color:#111">Kindle</span><span style="left:273px;top:879px;font:13px/18px 'Liberation Sans',sans-serif;color:#555">$9.99</span>
<div style="left:414px;top:853px;width:143px;height:50px;border:1px solid #e77600;border-radius:3px;background:#fef8f2"></div><span style="left:425px;top:860px;font:bold 13px/18px 'Liberation Sans',sans-serif;color:#111">Paperback</span><span style="left:425px;top:879px;font:bold 13px/18px 'Liberation Sans',sans-serif;color:#b12704">$10.66</span><span style="left:272px;top:910px;font:11px/14px 'Liberation Sans',sans-serif;color:#0066c0">Read with Our <b style="color:#b12704">Free App</b></span><span style="left:425px;top:910px;font:11px/14px 'Liberation Sans',sans-serif;color:#0066c0">20 Used <i style="font-style:normal;color:#555">from $5.54</i></span><span style="left:425px;top:926px;font:11px/14px 'Liberation Sans',sans-serif;color:#0066c0">55 New <i style="font-style:normal;color:#555">from $6.49</i></span><span style="left:262px;top:965px;font:bold 14px/18px 'Liberation Sans',sans-serif;color:#222;letter-spacing:.05px">TRAIN EASIER TO RUN FASTER</span><svg style="left:75px;top:984px" width="22" height="22" viewBox="0 0 22 22"><path d="M3.500 15 A8 8 0 0 1 5.500 6.500" stroke="#1a86c7" stroke-width="3" fill="none"/><path d="M12 4.200 A8 8 0 0 1 19 15" stroke="#1a86c7" stroke-width="3" fill="none"/><path d="M3.500 2 L11.500 1 L8.500 8Z" fill="#1a86c7"/></svg><span style="left:100px;top:986px;font:13px/18px 'Liberation Sans',sans-serif;color:#0066c0">Flip to back</span></div></div>
<div class="sb" style="left:494px;top:506px;width:17px;height:492px;"></div>
<div class="tri" style="left:499.0px;top:512.5px;border-left:4px solid transparent;border-right:4px solid transparent;border-bottom:4px solid #505050"></div>
<div class="tri" style="left:499.0px;top:987.5px;border-left:4px solid transparent;border-right:4px solid transparent;border-top:4px solid #505050"></div>
<div class="thumb" style="left:495px;top:524px;width:15px;height:32px;"></div>
<div style="left:499.0px;top:536.0px;width:8px;height:1px;background:#606060;box-shadow:0 1px 0 #fff"></div>
<div style="left:499.0px;top:539.0px;width:8px;height:1px;background:#606060;box-shadow:0 1px 0 #fff"></div>
<div style="left:499.0px;top:542.0px;width:8px;height:1px;background:#606060;box-shadow:0 1px 0 #fff"></div>
<div style="left:511px;top:504px;width:1px;height:512px;background:#f8f8f8"></div>
<div style="left:512px;top:504px;width:1px;height:512px;background:#a0a0a0"></div>
<div style="left:1px;top:504px;width:510px;height:2px;background:#f0f0f0"></div>
<div class="sb" style="left:3px;top:998px;width:491px;height:16px;"></div>
<div class="tri" style="left:9.0px;top:1002.0px;border-top:4px solid transparent;border-bottom:4px solid transparent;border-right:4px solid #505050"></div>
<div class="tri" style="left:483.0px;top:1002.0px;border-top:4px solid transparent;border-bottom:4px solid transparent;border-left:4px solid #505050"></div>
<div class="thumbh" style="left:21px;top:999px;width:221px;height:14px;"></div>
<div style="left:127.5px;top:1002.0px;width:1px;height:8px;background:#606060;box-shadow:1px 0 0 #fff"></div>
<div style="left:130.5px;top:1002.0px;width:1px;height:8px;background:#606060;box-shadow:1px 0 0 #fff"></div>
<div style="left:133.5px;top:1002.0px;width:1px;height:8px;background:#606060;box-shadow:1px 0 0 #fff"></div>
<div style="left:1px;top:1014px;width:511px;height:1px;background:#fafafa"></div>
<div style="left:1px;top:1015px;width:512px;height:1px;background:#a0a0a0"></div>
<div class="sb" style="left:494px;top:998px;width:17px;height:16px;"></div>
<div style="left:1px;top:506px;width:2px;height:510px;background:#f0f0f0"></div></div></div>
<div style="left:9px;top:485px;width:20px;height:1px;background:#de5a5a;border-radius:1px 1px 0 0;opacity:.85"></div><svg viewBox="0 0 22 17" preserveAspectRatio="none" width="22" height="17" style="position:absolute;left:8px;top:487px"><defs><linearGradient id="rg2" x1="0" y1="0" x2="0" y2="1"><stop offset="0" stop-color="#a30606"/><stop offset="1" stop-color="#6a0008"/></linearGradient></defs><rect width="22" height="17" rx="1.2" fill="url(#rg2)"/><g fill="#fff"><circle cx="12.65" cy="1.5" r="1.05"/><path d="M12 2.500L10.600 3.200L9 4.600L9.300 6.600L9.900 6.500L9.800 5L10.900 4.200L11 8L10.800 9.400L9.600 11L7 10.400L5.200 10.900L5 11.600L5.800 11.800L7.200 11.400L10 12.200L12.200 10.200L13.500 12.200L14.300 14.900L16.600 15.900L16.800 15.200L15.300 14.400L14.800 12L13.700 9L13.800 5.200L15.800 5.900L16 5.200L14.200 4.200L13.600 3L13 2.500Z"/></g></svg>
<div class="pnl" style="left:518px;top:42px;width:851px;height:177px;border-left-width:2px">
<div class="hd"></div>
<div style="left:820px;top:3px;width:9px;height:9px;border:1px solid #000"></div>
<div style="left:820px;top:5px;width:9px;height:1px;background:#000"></div><svg style="left:835px;top:4px" width="8" height="7" viewBox="0 0 8 7"><path d="M.7 .4L7.3 6.6M7.3 .4L.7 6.6" stroke="#000" stroke-width="1.6" fill="none"/></svg><span class="a" style="left:37px;top:-1px;line-height:16px;">Zones</span>
<div style="left:-520px;top:-43px;width:1920px;height:1040px">
<div style="left:520px;top:61px;width:848px;height:31px;background:#f0f0f0"></div>
<div class="th" style="left:520px;top:61px;width:81px;height:31px;"></div>
<div class="th" style="left:601px;top:61px;width:505px;height:31px;"><span class="b ct" style="left:0px;top:6.5px;line-height:16px;">Description</span></div>
<div class="th" style="left:1106px;top:61px;width:67px;height:31px;"><span class="b ct" style="left:0px;top:6.5px;line-height:16px;">Min pulse</span></div>
<div class="th" style="left:1173px;top:61px;width:67px;height:31px;"><span class="b ct" style="left:0px;top:6.5px;line-height:16px;">Max pulse</span></div>
<div class="th" style="left:520px;top:92px;width:81px;height:21px;"><span class="b ct" style="left:0px;top:2.5px;line-height:16px;">Zone 0</span></div>
<div class="c G" style="left:601px;top:92px;width:505px;height:21px;"><span class="s" style="left:2px;top:2px;line-height:16px;letter-spacing:-0.668px;">Rest</span></div>
<div class="c G" style="left:1106px;top:92px;width:67px;height:21px;"><span class="s" style="left:2px;top:2px;line-height:16px;letter-spacing:-0.391px;">0 (0%)</span></div>
<div class="c G" style="left:1173px;top:92px;width:67px;height:21px;"><span class="s" style="left:2px;top:2px;line-height:16px;letter-spacing:-0.485px;">128 (75%)</span></div>
<div class="th" style="left:520px;top:113px;width:81px;height:21px;"><span class="b ct" style="left:0px;top:2.5px;line-height:16px;">Zone 1</span></div>
<div class="c G" style="left:601px;top:113px;width:505px;height:21px;"><span class="s" style="left:2px;top:2px;line-height:16px;letter-spacing:-0.078px;">Really slow. You  really hold yourself back.</span></div>
<div class="c G" style="left:1106px;top:113px;width:67px;height:21px;"><span class="s" style="left:2px;top:2px;line-height:16px;letter-spacing:-0.485px;">128 (75%)</span></div>
<div class="c G" style="left:1173px;top:113px;width:67px;height:21px;"><span class="s" style="left:2px;top:2px;line-height:16px;letter-spacing:-0.485px;">136 (80%)</span></div>
<div class="th" style="left:520px;top:134px;width:81px;height:21px;"><span class="b ct" style="left:0px;top:2.5px;line-height:16px;">Zone 2</span></div>
<div class="c G" style="left:601px;top:134px;width:505px;height:21px;"><span class="s" style="left:2px;top:2px;line-height:16px;letter-spacing:0.009px;">Slow. You hold back a little and do not push yourself.</span></div>
<div class="c G" style="left:1106px;top:134px;width:67px;height:21px;"><span class="s" style="left:2px;top:2px;line-height:16px;letter-spacing:-0.485px;">138 (81%)</span></div>
<div class="c G" style="left:1173px;top:134px;width:67px;height:21px;"><span class="s" style="left:2px;top:2px;line-height:16px;letter-spacing:-0.485px;">151 (89%)</span></div>
<div class="th" style="left:520px;top:155px;width:81px;height:21px;"><span class="b ct" style="left:0px;top:2.5px;line-height:16px;">Zone 3</span></div>
<div class="c Y" style="left:601px;top:155px;width:505px;height:21px;"><span class="s" style="left:2px;top:2px;line-height:16px;letter-spacing:-0.045px;">Medium Hard. You could hold this pace in 20-30 min (less trained) or 50-60 min (well trained).</span></div>
<div class="c Y" style="left:1106px;top:155px;width:67px;height:21px;"><span class="s" style="left:2px;top:2px;line-height:16px;letter-spacing:-0.485px;">163 (96%)</span></div>
<div class="c Y" style="left:1173px;top:155px;width:67px;height:21px;"><span class="s" style="left:2px;top:2px;line-height:16px;letter-spacing:-0.504px;">170 (100%)</span></div>
<div class="th" style="left:520px;top:176px;width:81px;height:21px;"><span class="b ct" style="left:0px;top:2.5px;line-height:16px;">Zone 4</span></div>
<div class="c P" style="left:601px;top:176px;width:505px;height:21px;"><span class="s" style="left:2px;top:2px;line-height:16px;letter-spacing:-0.051px;">Hard. You could hold this pace for 10 min (less trained) or 15 min (well trained).</span></div>
<div class="c P" style="left:1106px;top:176px;width:67px;height:21px;"><span class="s" style="left:2px;top:2px;line-height:16px;letter-spacing:-0.504px;">173 (102%)</span></div>
<div class="c P" style="left:1173px;top:176px;width:67px;height:21px;"><span class="s" style="left:2px;top:2px;line-height:16px;letter-spacing:-0.504px;">179 (105%)</span></div>
<div class="th" style="left:520px;top:197px;width:81px;height:21px;"><span class="b ct" style="left:0px;top:2.5px;line-height:16px;">Zone 5</span></div>
<div class="c P" style="left:601px;top:197px;width:505px;height:21px;"><span class="s" style="left:2px;top:2px;line-height:16px;letter-spacing:-0.071px;">Very hard. You can only hold this pace for one or two minutes, maybe less.</span></div>
<div class="c P" style="left:1106px;top:197px;width:67px;height:21px;"><span class="s" style="left:2px;top:2px;line-height:16px;letter-spacing:-0.504px;">180 (106%)</span></div>
<div class="c P" style="left:1173px;top:197px;width:67px;height:21px;"><span class="s" style="left:2px;top:2px;line-height:16px;letter-spacing:-0.504px;">221 (130%)</span></div>
<div style="left:519px;top:60px;width:850px;height:1px;background:#a8a8a8"></div></div></div><svg viewBox="0 0 22 17" preserveAspectRatio="none" width="22" height="17" style="position:absolute;left:526px;top:43px"><defs><linearGradient id="rg3" x1="0" y1="0" x2="0" y2="1"><stop offset="0" stop-color="#a30606"/><stop offset="1" stop-color="#6a0008"/></linearGradient></defs><rect width="22" height="17" rx="1.2" fill="url(#rg3)"/><g fill="#fff"><circle cx="12.65" cy="1.5" r="1.05"/><path d="M12 2.500L10.600 3.200L9 4.600L9.300 6.600L9.900 6.500L9.800 5L10.900 4.200L11 8L10.800 9.400L9.600 11L7 10.400L5.200 10.900L5 11.600L5.800 11.800L7.200 11.400L10 12.200L12.200 10.200L13.500 12.200L14.300 14.900L16.600 15.900L16.800 15.200L15.300 14.400L14.800 12L13.700 9L13.800 5.200L15.800 5.900L16 5.200L14.200 4.200L13.600 3L13 2.500Z"/></g></svg>
<div class="pnl" style="left:518px;top:223px;width:851px;height:794px;border-left-width:2px">
<div class="hd"></div>
<div style="left:820px;top:3px;width:9px;height:9px;border:1px solid #000"></div>
<div style="left:820px;top:5px;width:9px;height:1px;background:#000"></div><svg style="left:835px;top:4px" width="8" height="7" viewBox="0 0 8 7"><path d="M.7 .4L7.3 6.6M7.3 .4L.7 6.6" stroke="#000" stroke-width="1.6" fill="none"/></svg><span class="a" style="left:37px;top:-1px;line-height:16px;">Plan for Marathon (42 195m), level Medium. Dates 2015-05-25 to 2015-09-27 (18 weeks)</span>
<div style="left:-520px;top:-224px;width:1920px;height:1040px">
<div style="left:520px;top:241px;width:831px;height:1px;background:#a0a0a0"></div>
<div style="left:520px;top:242px;width:831px;height:31px;overflow:hidden">
<div style="left:-520px;top:-242px;width:1920px;height:1040px">
<div class="th" style="left:520px;top:242px;width:67px;height:31px;"><span class="b ct" style="left:0px;top:6.5px;line-height:16px;">Date</span></div>
<div class="th" style="left:587px;top:242px;width:121px;height:31px;"><span class="b ct" style="left:0px;top:6.5px;line-height:16px;">Training</span></div>
<div class="th" style="left:708px;top:242px;width:40px;height:31px;"><span class="b ct" style="left:0px;top:6.5px;line-height:16px;">Level</span></div>
<div class="th" style="left:748px;top:242px;width:46px;height:31px;"><span class="b ct" style="left:0px;top:6.5px;line-height:16px;">Part 1</span></div>
<div class="th" style="left:794px;top:242px;width:89px;height:31px;"><span class="b ct" style="left:0px;top:6.5px;line-height:16px;">Time/distance</span></div>
<div class="th" style="left:883px;top:242px;width:46px;height:31px;"><span class="b ct" style="left:0px;top:6.5px;line-height:16px;">Part 2</span></div>
<div class="th" style="left:929px;top:242px;width:89px;height:31px;"><span class="b ct" style="left:0px;top:6.5px;line-height:16px;">Time/distance</span></div>
<div class="th" style="left:1018px;top:242px;width:73px;height:31px;"><span class="b ct" style="left:0px;top:6.5px;line-height:16px;">Part 3</span></div>
<div class="th" style="left:1091px;top:242px;width:150px;height:31px;"><span class="b ct" style="left:0px;top:6.5px;line-height:16px;">Time/distance</span></div>
<div class="th" style="left:1241px;top:242px;width:46px;height:31px;"><span class="b ct" style="left:0px;top:6.5px;line-height:16px;">Part 4</span></div>
<div class="th" style="left:1287px;top:242px;width:92px;height:31px;"><span class="b ct" style="left:0px;top:6.5px;line-height:16px;">Time/distance</span></div></div></div>
<div style="left:520px;top:273px;width:831px;height:727px;overflow:hidden">
<div style="left:-520px;top:-273px;width:1920px;height:1040px">
<div class="c Y" style="left:520px;top:270px;width:67px;height:21px;"><span class="s" style="left:0px;top:2px;line-height:16px;letter-spacing:-0.338px;left:auto;right:3px">2015-08-30</span></div>
<div class="c Y" style="left:587px;top:270px;width:121px;height:21px;"><span class="s" style="left:2px;top:2px;line-height:16px;letter-spacing:-0.253px;">Long Run Fast Finish</span></div>
<div class="c Y" style="left:708px;top:270px;width:40px;height:21px;"><span class="s" style="left:2px;top:2px;line-height:16px;letter-spacing:-0.673px;">4</span></div>
<div class="c G" style="left:748px;top:270px;width:46px;height:21px;"><span class="s" style="left:2px;top:2px;line-height:16px;letter-spacing:-0.226px;">Zone 1</span></div>
<div class="c G" style="left:794px;top:270px;width:89px;height:21px;"><span class="s" style="left:2px;top:2px;line-height:16px;letter-spacing:-0.384px;">0.80 km</span></div>
<div class="c G" style="left:883px;top:270px;width:46px;height:21px;"><span class="s" style="left:2px;top:2px;line-height:16px;letter-spacing:-0.226px;">Zone 2</span></div>
<div class="c G" style="left:929px;top:270px;width:89px;height:21px;"><span class="s" style="left:2px;top:2px;line-height:16px;letter-spacing:-0.336px;">14 km</span></div>
<div class="c Y" style="left:1018px;top:270px;width:73px;height:21px;"><span class="s" style="left:2px;top:2px;line-height:16px;letter-spacing:-0.226px;">Zone 3</span></div>
<div class="c Y" style="left:1091px;top:270px;width:150px;height:21px;"><span class="s" style="left:2px;top:2px;line-height:16px;letter-spacing:-0.251px;">2 km</span></div>
<div class="c W" style="left:1241px;top:270px;width:46px;height:21px;"></div>
<div class="c W" style="left:1287px;top:270px;width:89px;height:21px;"></div>
<div class="c L" style="left:520px;top:291px;width:67px;height:21px;"><span class="s" style="left:1px;top:2px;line-height:16px;letter-spacing:-0.448px;">Week 15</span></div>
<div class="c L" style="left:587px;top:291px;width:121px;height:21px;"><span class="s" style="left:2px;top:2px;line-height:16px;letter-spacing:-0.438px;">Peak phase</span></div>
<div class="c W" style="left:708px;top:291px;width:40px;height:21px;"></div>
<div class="c W" style="left:748px;top:291px;width:46px;height:21px;"></div>
<div class="c W" style="left:794px;top:291px;width:89px;height:21px;"></div>
<div class="c W" style="left:883px;top:291px;width:46px;height:21px;"></div>
<div class="c W" style="left:929px;top:291px;width:89px;height:21px;"></div>
<div class="c W" style="left:1018px;top:291px;width:73px;height:21px;"></div>
<div class="c W" style="left:1091px;top:291px;width:150px;height:21px;"></div>
<div class="c W" style="left:1241px;top:291px;width:46px;height:21px;"></div>
<div class="c W" style="left:1287px;top:291px;width:89px;height:21px;"></div>
<div class="c Y" style="left:520px;top:312px;width:67px;height:21px;"><span class="s" style="left:0px;top:2px;line-height:16px;letter-spacing:-0.338px;left:auto;right:3px">2015-09-01</span></div>
<div class="c Y" style="left:587px;top:312px;width:121px;height:21px;"><span class="s" style="left:2px;top:2px;line-height:16px;letter-spacing:-0.152px;">Tempo Run</span></div>
<div class="c Y" style="left:708px;top:312px;width:40px;height:21px;"><span class="s" style="left:2px;top:2px;line-height:16px;letter-spacing:-0.673px;">4</span></div>
<div class="c G" style="left:748px;top:312px;width:46px;height:21px;"><span class="s" style="left:2px;top:2px;line-height:16px;letter-spacing:-0.226px;">Zone 1</span></div>
<div class="c G" style="left:794px;top:312px;width:89px;height:21px;"><span class="s" style="left:2px;top:2px;line-height:16px;letter-spacing:-0.17px;">05 minutes</span></div>
<div class="c G" style="left:883px;top:312px;width:46px;height:21px;"><span class="s" style="left:2px;top:2px;line-height:16px;letter-spacing:-0.226px;">Zone 2</span></div>
<div class="c G" style="left:929px;top:312px;width:89px;height:21px;"><span class="s" style="left:2px;top:2px;line-height:16px;letter-spacing:-0.17px;">05 minutes</span></div>
<div class="c Y" style="left:1018px;top:312px;width:73px;height:21px;"><span class="s" style="left:2px;top:2px;line-height:16px;letter-spacing:-0.226px;">Zone 3</span></div>
<div class="c Y" style="left:1091px;top:312px;width:150px;height:21px;"><span class="s" style="left:2px;top:2px;line-height:16px;letter-spacing:-0.17px;">24 minutes</span></div>
<div class="c G" style="left:1241px;top:312px;width:46px;height:21px;"><span class="s" style="left:2px;top:2px;line-height:16px;letter-spacing:-0.226px;">Zone 2</span></div>
<div class="c G" style="left:1287px;top:312px;width:89px;height:21px;"><span class="s" style="left:2px;top:2px;line-height:16px;letter-spacing:-0.17px;">05 minutes</span></div>
<div class="c G" style="left:520px;top:333px;width:67px;height:21px;"><span class="s" style="left:0px;top:2px;line-height:16px;letter-spacing:-0.338px;left:auto;right:3px">2015-09-02</span></div>
<div class="c G" style="left:587px;top:333px;width:121px;height:21px;"><span class="s" style="left:2px;top:2px;line-height:16px;letter-spacing:-0.336px;">Recovery Run</span></div>
<div class="c G" style="left:708px;top:333px;width:40px;height:21px;"><span class="s" style="left:2px;top:2px;line-height:16px;letter-spacing:-0.673px;">5</span></div>
<div class="c G" style="left:748px;top:333px;width:46px;height:21px;"><span class="s" style="left:2px;top:2px;line-height:16px;letter-spacing:-0.226px;">Zone 1</span></div>
<div class="c G" style="left:794px;top:333px;width:89px;height:21px;"><span class="s" style="left:2px;top:2px;line-height:16px;letter-spacing:-0.17px;">40 minutes</span></div>
<div class="c W" style="left:883px;top:333px;width:46px;height:21px;"></div>
<div class="c W" style="left:929px;top:333px;width:89px;height:21px;"></div>
<div class="c W" style="left:1018px;top:333px;width:73px;height:21px;"></div>
<div class="c W" style="left:1091px;top:333px;width:150px;height:21px;"></div>
<div class="c W" style="left:1241px;top:333px;width:46px;height:21px;"></div>
<div class="c W" style="left:1287px;top:333px;width:89px;height:21px;"></div>
<div class="c G" style="left:520px;top:354px;width:67px;height:21px;"><span class="s" style="left:0px;top:2px;line-height:16px;letter-spacing:-0.338px;left:auto;right:3px">2015-09-03</span></div>
<div class="c G" style="left:587px;top:354px;width:121px;height:21px;"><span class="s" style="left:2px;top:2px;line-height:16px;letter-spacing:-0.028px;">Foundation Run</span></div>
<div class="c G" style="left:708px;top:354px;width:40px;height:21px;"><span class="s" style="left:2px;top:2px;line-height:16px;letter-spacing:-0.673px;">5</span></div>
<div class="c G" style="left:748px;top:354px;width:46px;height:21px;"><span class="s" style="left:2px;top:2px;line-height:16px;letter-spacing:-0.226px;">Zone 1</span></div>
<div class="c G" style="left:794px;top:354px;width:89px;height:21px;"><span class="s" style="left:2px;top:2px;line-height:16px;letter-spacing:-0.17px;">05 minutes</span></div>
<div class="c G" style="left:883px;top:354px;width:46px;height:21px;"><span class="s" style="left:2px;top:2px;line-height:16px;letter-spacing:-0.226px;">Zone 2</span></div>
<div class="c G" style="left:929px;top:354px;width:89px;height:21px;"><span class="s" style="left:2px;top:2px;line-height:16px;letter-spacing:-0.17px;">30 minutes</span></div>
<div class="c G" style="left:1018px;top:354px;width:73px;height:21px;"><span class="s" style="left:2px;top:2px;line-height:16px;letter-spacing:-0.226px;">Zone 1</span></div>
<div class="c G" style="left:1091px;top:354px;width:150px;height:21px;"><span class="s" style="left:2px;top:2px;line-height:16px;letter-spacing:-0.17px;">05 minutes</span></div>
<div class="c W" style="left:1241px;top:354px;width:46px;height:21px;"></div>
<div class="c W" style="left:1287px;top:354px;width:89px;height:21px;"></div>
<div class="c P" style="left:520px;top:375px;width:67px;height:36px;"><span class="s" style="left:0px;top:2px;line-height:16px;letter-spacing:-0.338px;left:auto;right:3px">2015-09-04</span></div>
<div class="c P" style="left:587px;top:375px;width:121px;height:36px;"><span class="s" style="left:2px;top:2px;line-height:16px;letter-spacing:-0.102px;">Long Interval Run</span></div>
<div class="c P" style="left:708px;top:375px;width:40px;height:36px;"><span class="s" style="left:2px;top:2px;line-height:16px;letter-spacing:-0.673px;">2</span></div>
<div class="c G" style="left:748px;top:375px;width:46px;height:36px;"><span class="s" style="left:2px;top:2px;line-height:16px;letter-spacing:-0.226px;">Zone 1</span></div>
<div class="c G" style="left:794px;top:375px;width:89px;height:36px;"><span class="s" style="left:2px;top:2px;line-height:16px;letter-spacing:-0.17px;">05 minutes</span></div>
<div class="c G" style="left:883px;top:375px;width:46px;height:36px;"><span class="s" style="left:2px;top:2px;line-height:16px;letter-spacing:-0.226px;">Zone 2</span></div>
<div class="c G" style="left:929px;top:375px;width:89px;height:36px;"><span class="s" style="left:2px;top:2px;line-height:16px;letter-spacing:-0.17px;">05 minutes</span></div>
<div class="c P" style="left:1018px;top:375px;width:73px;height:36px;"><span class="s" style="left:2px;top:2px;line-height:16px;letter-spacing:-0.245px;">4 x (Zone 4</span><span class="s" style="left:2px;top:17px;line-height:16px;letter-spacing:-0.194px;">Zone 1)</span></div>
<div class="c P" style="left:1091px;top:375px;width:150px;height:36px;"><span class="s" style="left:2px;top:2px;line-height:16px;letter-spacing:-0.202px;">4 x (03 minutes</span><span class="s" style="left:2px;top:17px;line-height:16px;letter-spacing:-0.154px;">02 minutes)</span></div>
<div class="c G" style="left:1241px;top:375px;width:46px;height:36px;"><span class="s" style="left:2px;top:2px;line-height:16px;letter-spacing:-0.226px;">Zone 1</span></div>
<div class="c G" style="left:1287px;top:375px;width:89px;height:36px;"><span class="s" style="left:2px;top:2px;line-height:16px;letter-spacing:-0.17px;">05 minutes</span></div>
<div class="c G" style="left:520px;top:411px;width:67px;height:21px;"><span class="s" style="left:0px;top:2px;line-height:16px;letter-spacing:-0.338px;left:auto;right:3px">2015-09-05</span></div>
<div class="c G" style="left:587px;top:411px;width:121px;height:21px;"><span class="s" style="left:2px;top:2px;line-height:16px;letter-spacing:-0.336px;">Recovery Run</span></div>
<div class="c G" style="left:708px;top:411px;width:40px;height:21px;"><span class="s" style="left:2px;top:2px;line-height:16px;letter-spacing:-0.673px;">5</span></div>
<div class="c G" style="left:748px;top:411px;width:46px;height:21px;"><span class="s" style="left:2px;top:2px;line-height:16px;letter-spacing:-0.226px;">Zone 1</span></div>
<div class="c G" style="left:794px;top:411px;width:89px;height:21px;"><span class="s" style="left:2px;top:2px;line-height:16px;letter-spacing:-0.17px;">40 minutes</span></div>
<div class="c W" style="left:883px;top:411px;width:46px;height:21px;"></div>
<div class="c W" style="left:929px;top:411px;width:89px;height:21px;"></div>
<div class="c W" style="left:1018px;top:411px;width:73px;height:21px;"></div>
<div class="c W" style="left:1091px;top:411px;width:150px;height:21px;"></div>
<div class="c W" style="left:1241px;top:411px;width:46px;height:21px;"></div>
<div class="c W" style="left:1287px;top:411px;width:89px;height:21px;"></div>
<div class="c P" style="left:520px;top:432px;width:67px;height:21px;"><span class="s" style="left:0px;top:2px;line-height:16px;letter-spacing:-0.338px;left:auto;right:3px">2015-09-06</span></div>
<div class="c P" style="left:587px;top:432px;width:121px;height:21px;"><span class="s" style="left:2px;top:2px;line-height:16px;letter-spacing:0.125px;">Half Marathon</span></div>
<div class="c P" style="left:708px;top:432px;width:40px;height:21px;"><span class="s" style="left:2px;top:2px;line-height:16px;letter-spacing:-0.673px;">1</span></div>
<div class="c W" style="left:748px;top:432px;width:46px;height:21px;"></div>
<div class="c W" style="left:794px;top:432px;width:89px;height:21px;"></div>
<div class="c W" style="left:883px;top:432px;width:46px;height:21px;"></div>
<div class="c W" style="left:929px;top:432px;width:89px;height:21px;"></div>
<div class="c W" style="left:1018px;top:432px;width:73px;height:21px;"></div>
<div class="c W" style="left:1091px;top:432px;width:150px;height:21px;"></div>
<div class="c W" style="left:1241px;top:432px;width:46px;height:21px;"></div>
<div class="c W" style="left:1287px;top:432px;width:89px;height:21px;"></div>
<div class="c L" style="left:520px;top:453px;width:67px;height:21px;"><span class="s" style="left:1px;top:2px;line-height:16px;letter-spacing:-0.448px;">Week 16</span></div>
<div class="c L" style="left:587px;top:453px;width:121px;height:21px;"><span class="s" style="left:2px;top:2px;line-height:16px;letter-spacing:-0.438px;">Peak phase</span></div>
<div class="c W" style="left:708px;top:453px;width:40px;height:21px;"></div>
<div class="c W" style="left:748px;top:453px;width:46px;height:21px;"></div>
<div class="c W" style="left:794px;top:453px;width:89px;height:21px;"></div>
<div class="c W" style="left:883px;top:453px;width:46px;height:21px;"></div>
<div class="c W" style="left:929px;top:453px;width:89px;height:21px;"></div>
<div class="c W" style="left:1018px;top:453px;width:73px;height:21px;"></div>
<div class="c W" style="left:1091px;top:453px;width:150px;height:21px;"></div>
<div class="c W" style="left:1241px;top:453px;width:46px;height:21px;"></div>
<div class="c W" style="left:1287px;top:453px;width:89px;height:21px;"></div>
<div class="c G" style="left:520px;top:474px;width:67px;height:21px;"><span class="s" style="left:0px;top:2px;line-height:16px;letter-spacing:-0.338px;left:auto;right:3px">2015-09-07</span></div>
<div class="c G" style="left:587px;top:474px;width:121px;height:21px;"><span class="s" style="left:2px;top:2px;line-height:16px;letter-spacing:-0.336px;">Recovery Run</span></div>
<div class="c G" style="left:708px;top:474px;width:40px;height:21px;"><span class="s" style="left:2px;top:2px;line-height:16px;letter-spacing:-0.673px;">6</span></div>
<div class="c G" style="left:748px;top:474px;width:46px;height:21px;"><span class="s" style="left:2px;top:2px;line-height:16px;letter-spacing:-0.226px;">Zone 1</span></div>
<div class="c G" style="left:794px;top:474px;width:89px;height:21px;"><span class="s" style="left:2px;top:2px;line-height:16px;letter-spacing:-0.17px;">45 minutes</span></div>
<div class="c W" style="left:883px;top:474px;width:46px;height:21px;"></div>
<div class="c W" style="left:929px;top:474px;width:89px;height:21px;"></div>
<div class="c W" style="left:1018px;top:474px;width:73px;height:21px;"></div>
<div class="c W" style="left:1091px;top:474px;width:150px;height:21px;"></div>
<div class="c W" style="left:1241px;top:474px;width:46px;height:21px;"></div>
<div class="c W" style="left:1287px;top:474px;width:89px;height:21px;"></div>
<div class="c Y" style="left:520px;top:495px;width:67px;height:21px;"><span class="s" style="left:0px;top:2px;line-height:16px;letter-spacing:-0.338px;left:auto;right:3px">2015-09-08</span></div>
<div class="c Y" style="left:587px;top:495px;width:121px;height:21px;"><span class="s" style="left:2px;top:2px;line-height:16px;letter-spacing:-0.152px;">Tempo Run</span></div>
<div class="c Y" style="left:708px;top:495px;width:40px;height:21px;"><span class="s" style="left:2px;top:2px;line-height:16px;letter-spacing:-0.673px;">6</span></div>
<div class="c G" style="left:748px;top:495px;width:46px;height:21px;"><span class="s" style="left:2px;top:2px;line-height:16px;letter-spacing:-0.226px;">Zone 1</span></div>
<div class="c G" style="left:794px;top:495px;width:89px;height:21px;"><span class="s" style="left:2px;top:2px;line-height:16px;letter-spacing:-0.17px;">05 minutes</span></div>
<div class="c G" style="left:883px;top:495px;width:46px;height:21px;"><span class="s" style="left:2px;top:2px;line-height:16px;letter-spacing:-0.226px;">Zone 2</span></div>
<div class="c G" style="left:929px;top:495px;width:89px;height:21px;"><span class="s" style="left:2px;top:2px;line-height:16px;letter-spacing:-0.17px;">05 minutes</span></div>
<div class="c Y" style="left:1018px;top:495px;width:73px;height:21px;"><span class="s" style="left:2px;top:2px;line-height:16px;letter-spacing:-0.226px;">Zone 3</span></div>
<div class="c Y" style="left:1091px;top:495px;width:150px;height:21px;"><span class="s" style="left:2px;top:2px;line-height:16px;letter-spacing:-0.17px;">30 minutes</span></div>
<div class="c G" style="left:1241px;top:495px;width:46px;height:21px;"><span class="s" style="left:2px;top:2px;line-height:16px;letter-spacing:-0.226px;">Zone 2</span></div>
<div class="c G" style="left:1287px;top:495px;width:89px;height:21px;"><span class="s" style="left:2px;top:2px;line-height:16px;letter-spacing:-0.17px;">05 minutes</span></div>
<div class="c G" style="left:520px;top:516px;width:67px;height:21px;"><span class="s" style="left:0px;top:2px;line-height:16px;letter-spacing:-0.338px;left:auto;right:3px">2015-09-09</span></div>
<div class="c G" style="left:587px;top:516px;width:121px;height:21px;"><span class="s" style="left:2px;top:2px;line-height:16px;letter-spacing:-0.336px;">Recovery Run</span></div>
<div class="c G" style="left:708px;top:516px;width:40px;height:21px;"><span class="s" style="left:2px;top:2px;line-height:16px;letter-spacing:-0.673px;">6</span></div>
<div class="c G" style="left:748px;top:516px;width:46px;height:21px;"><span class="s" style="left:2px;top:2px;line-height:16px;letter-spacing:-0.226px;">Zone 1</span></div>
<div class="c G" style="left:794px;top:516px;width:89px;height:21px;"><span class="s" style="left:2px;top:2px;line-height:16px;letter-spacing:-0.17px;">45 minutes</span></div>
<div class="c W" style="left:883px;top:516px;width:46px;height:21px;"></div>
<div class="c W" style="left:929px;top:516px;width:89px;height:21px;"></div>
<div class="c W" style="left:1018px;top:516px;width:73px;height:21px;"></div>
<div class="c W" style="left:1091px;top:516px;width:150px;height:21px;"></div>
<div class="c W" style="left:1241px;top:516px;width:46px;height:21px;"></div>
<div class="c W" style="left:1287px;top:516px;width:89px;height:21px;"></div>
<div class="c G" style="left:520px;top:537px;width:67px;height:21px;"><span class="s" style="left:0px;top:2px;line-height:16px;letter-spacing:-0.338px;left:auto;right:3px">2015-09-10</span></div>
<div class="c G" style="left:587px;top:537px;width:121px;height:21px;"><span class="s" style="left:2px;top:2px;line-height:16px;letter-spacing:-0.028px;">Foundation Run</span></div>
<div class="c G" style="left:708px;top:537px;width:40px;height:21px;"><span class="s" style="left:2px;top:2px;line-height:16px;letter-spacing:-0.673px;">6</span></div>
<div class="c G" style="left:748px;top:537px;width:46px;height:21px;"><span class="s" style="left:2px;top:2px;line-height:16px;letter-spacing:-0.226px;">Zone 1</span></div>
<div class="c G" style="left:794px;top:537px;width:89px;height:21px;"><span class="s" style="left:2px;top:2px;line-height:16px;letter-spacing:-0.17px;">05 minutes</span></div>
<div class="c G" style="left:883px;top:537px;width:46px;height:21px;"><span class="s" style="left:2px;top:2px;line-height:16px;letter-spacing:-0.226px;">Zone 2</span></div>
<div class="c G" style="left:929px;top:537px;width:89px;height:21px;"><span class="s" style="left:2px;top:2px;line-height:16px;letter-spacing:-0.17px;">35 minutes</span></div>
<div class="c G" style="left:1018px;top:537px;width:73px;height:21px;"><span class="s" style="left:2px;top:2px;line-height:16px;letter-spacing:-0.226px;">Zone 1</span></div>
<div class="c G" style="left:1091px;top:537px;width:150px;height:21px;"><span class="s" style="left:2px;top:2px;line-height:16px;letter-spacing:-0.17px;">05 minutes</span></div>
<div class="c W" style="left:1241px;top:537px;width:46px;height:21px;"></div>
<div class="c W" style="left:1287px;top:537px;width:89px;height:21px;"></div>
<div class="c P" style="left:520px;top:558px;width:67px;height:21px;"><span class="s" style="left:0px;top:2px;line-height:16px;letter-spacing:-0.249px;left:auto;right:3px">2015-09-11</span></div>
<div class="c P" style="left:587px;top:558px;width:121px;height:21px;"><span class="s" style="left:2px;top:2px;line-height:16px;letter-spacing:-0.058px;">Mixed Interval Run</span></div>
<div class="c P" style="left:708px;top:558px;width:40px;height:21px;"><span class="s" style="left:2px;top:2px;line-height:16px;letter-spacing:-0.673px;">2</span></div>
<div class="c G" style="left:748px;top:558px;width:46px;height:21px;"><span class="s" style="left:2px;top:2px;line-height:16px;letter-spacing:-0.226px;">Zone 1</span></div>
<div class="c G" style="left:794px;top:558px;width:89px;height:21px;"><span class="s" style="left:2px;top:2px;line-height:16px;letter-spacing:-0.17px;">05 minutes</span></div>
<div class="c G" style="left:883px;top:558px;width:46px;height:21px;"><span class="s" style="left:2px;top:2px;line-height:16px;letter-spacing:-0.226px;">Zone 2</span></div>
<div class="c G" style="left:929px;top:558px;width:89px;height:21px;"><span class="s" style="left:2px;top:2px;line-height:16px;letter-spacing:-0.17px;">05 minutes</span></div>
<div class="c P" style="left:1018px;top:558px;width:73px;height:21px;"><span class="s" style="left:2px;top:2px;line-height:16px;letter-spacing:-0.226px;">Zone 5</span></div>
<div class="c P" style="left:1091px;top:558px;width:150px;height:21px;"><span class="s" style="left:2px;top:2px;line-height:16px;letter-spacing:-0.258px;">01 minutes 30 seconds</span></div>
<div class="c G" style="left:1241px;top:558px;width:46px;height:21px;"><span class="s" style="left:2px;top:2px;line-height:16px;letter-spacing:-0.226px;">Zone 1</span></div>
<div class="c G" style="left:1287px;top:558px;width:89px;height:21px;"><span class="s" style="left:2px;top:2px;line-height:16px;letter-spacing:-0.17px;">02 minutes</span></div>
<div class="c G" style="left:520px;top:579px;width:67px;height:21px;"><span class="s" style="left:0px;top:2px;line-height:16px;letter-spacing:-0.338px;left:auto;right:3px">2015-09-12</span></div>
<div class="c G" style="left:587px;top:579px;width:121px;height:21px;"><span class="s" style="left:2px;top:2px;line-height:16px;letter-spacing:-0.336px;">Recovery Run</span></div>
<div class="c G" style="left:708px;top:579px;width:40px;height:21px;"><span class="s" style="left:2px;top:2px;line-height:16px;letter-spacing:-0.673px;">6</span></div>
<div class="c G" style="left:748px;top:579px;width:46px;height:21px;"><span class="s" style="left:2px;top:2px;line-height:16px;letter-spacing:-0.226px;">Zone 1</span></div>
<div class="c G" style="left:794px;top:579px;width:89px;height:21px;"><span class="s" style="left:2px;top:2px;line-height:16px;letter-spacing:-0.17px;">45 minutes</span></div>
<div class="c W" style="left:883px;top:579px;width:46px;height:21px;"></div>
<div class="c W" style="left:929px;top:579px;width:89px;height:21px;"></div>
<div class="c W" style="left:1018px;top:579px;width:73px;height:21px;"></div>
<div class="c W" style="left:1091px;top:579px;width:150px;height:21px;"></div>
<div class="c W" style="left:1241px;top:579px;width:46px;height:21px;"></div>
<div class="c W" style="left:1287px;top:579px;width:89px;height:21px;"></div>
<div class="c Y" style="left:520px;top:600px;width:67px;height:36px;"><span class="s" style="left:0px;top:2px;line-height:16px;letter-spacing:-0.338px;left:auto;right:3px">2015-09-13</span></div>
<div class="c Y" style="left:587px;top:600px;width:121px;height:36px;"><span class="s" style="left:2px;top:2px;line-height:16px;letter-spacing:-0.303px;">Long Run Speed Play</span></div>
<div class="c Y" style="left:708px;top:600px;width:40px;height:36px;"><span class="s" style="left:2px;top:2px;line-height:16px;letter-spacing:-0.673px;">5</span></div>
<div class="c G" style="left:748px;top:600px;width:46px;height:36px;"><span class="s" style="left:2px;top:2px;line-height:16px;letter-spacing:-0.226px;">Zone 1</span></div>
<div class="c G" style="left:794px;top:600px;width:89px;height:36px;"><span class="s" style="left:2px;top:2px;line-height:16px;letter-spacing:-0.384px;">0.80 km</span></div>
<div class="c G" style="left:883px;top:600px;width:46px;height:36px;"><span class="s" style="left:2px;top:2px;line-height:16px;letter-spacing:-0.226px;">Zone 2</span></div>
<div class="c G" style="left:929px;top:600px;width:89px;height:36px;"><span class="s" style="left:2px;top:2px;line-height:16px;letter-spacing:-0.251px;">2 km</span></div>
<div class="c Y" style="left:1018px;top:600px;width:73px;height:36px;"><span class="s" style="left:2px;top:2px;line-height:16px;letter-spacing:-0.281px;">16 x (Zone 3</span><span class="s" style="left:2px;top:17px;line-height:16px;letter-spacing:-0.194px;">Zone 1)</span></div>
<div class="c Y" style="left:1091px;top:600px;width:150px;height:36px;"><span class="s" style="left:2px;top:2px;line-height:16px;letter-spacing:-0.361px;">16 x (0.40 km</span><span class="s" style="left:2px;top:17px;line-height:16px;letter-spacing:-0.335px;">1.21 km)</span></div>
<div class="c G" style="left:1241px;top:600px;width:46px;height:36px;"><span class="s" style="left:2px;top:2px;line-height:16px;letter-spacing:-0.226px;">Zone 1</span></div>
<div class="c G" style="left:1287px;top:600px;width:89px;height:36px;"><span class="s" style="left:2px;top:2px;line-height:16px;letter-spacing:-0.384px;">0.80 km</span></div>
<div class="c L" style="left:520px;top:636px;width:67px;height:21px;"><span class="s" style="left:1px;top:2px;line-height:16px;letter-spacing:-0.448px;">Week 17</span></div>
<div class="c L" style="left:587px;top:636px;width:121px;height:21px;"><span class="s" style="left:2px;top:2px;line-height:16px;letter-spacing:-0.277px;">Taper phase</span></div>
<div class="c W" style="left:708px;top:636px;width:40px;height:21px;"></div>
<div class="c W" style="left:748px;top:636px;width:46px;height:21px;"></div>
<div class="c W" style="left:794px;top:636px;width:89px;height:21px;"></div>
<div class="c W" style="left:883px;top:636px;width:46px;height:21px;"></div>
<div class="c W" style="left:929px;top:636px;width:89px;height:21px;"></div>
<div class="c W" style="left:1018px;top:636px;width:73px;height:21px;"></div>
<div class="c W" style="left:1091px;top:636px;width:150px;height:21px;"></div>
<div class="c W" style="left:1241px;top:636px;width:46px;height:21px;"></div>
<div class="c W" style="left:1287px;top:636px;width:89px;height:21px;"></div>
<div class="c G" style="left:520px;top:657px;width:67px;height:21px;"><span class="s" style="left:0px;top:2px;line-height:16px;letter-spacing:-0.338px;left:auto;right:3px">2015-09-14</span></div>
<div class="c G" style="left:587px;top:657px;width:121px;height:21px;"><span class="s" style="left:2px;top:2px;line-height:16px;letter-spacing:-0.336px;">Recovery Run</span></div>
<div class="c G" style="left:708px;top:657px;width:40px;height:21px;"><span class="s" style="left:2px;top:2px;line-height:16px;letter-spacing:-0.673px;">5</span></div>
<div class="c G" style="left:748px;top:657px;width:46px;height:21px;"><span class="s" style="left:2px;top:2px;line-height:16px;letter-spacing:-0.226px;">Zone 1</span></div>
<div class="c G" style="left:794px;top:657px;width:89px;height:21px;"><span class="s" style="left:2px;top:2px;line-height:16px;letter-spacing:-0.17px;">40 minutes</span></div>
<div class="c W" style="left:883px;top:657px;width:46px;height:21px;"></div>
<div class="c W" style="left:929px;top:657px;width:89px;height:21px;"></div>
<div class="c W" style="left:1018px;top:657px;width:73px;height:21px;"></div>
<div class="c W" style="left:1091px;top:657px;width:150px;height:21px;"></div>
<div class="c W" style="left:1241px;top:657px;width:46px;height:21px;"></div>
<div class="c W" style="left:1287px;top:657px;width:89px;height:21px;"></div>
<div class="c X" style="left:520px;top:678px;width:67px;height:36px;"><span class="s" style="left:0px;top:2px;line-height:16px;letter-spacing:-0.338px;left:auto;right:3px">2015-09-15</span></div>
<div class="c X" style="left:587px;top:678px;width:121px;height:36px;"><span class="s" style="left:2px;top:2px;line-height:16px;letter-spacing:-0.248px;">Cruise Interval Run</span></div>
<div class="c X" style="left:708px;top:678px;width:40px;height:36px;"><span class="s" style="left:2px;top:2px;line-height:16px;letter-spacing:-0.673px;">1</span></div>
<div class="c X" style="left:748px;top:678px;width:46px;height:36px;"><span class="s" style="left:2px;top:2px;line-height:16px;letter-spacing:-0.226px;">Zone 1</span></div>
<div class="c X" style="left:794px;top:678px;width:89px;height:36px;"><span class="s" style="left:2px;top:2px;line-height:16px;letter-spacing:-0.17px;">05 minutes</span></div>
<div class="c X" style="left:883px;top:678px;width:46px;height:36px;"><span class="s" style="left:2px;top:2px;line-height:16px;letter-spacing:-0.226px;">Zone 2</span></div>
<div class="c X" style="left:929px;top:678px;width:89px;height:36px;"><span class="s" style="left:2px;top:2px;line-height:16px;letter-spacing:-0.17px;">05 minutes</span></div>
<div class="c X" style="left:1018px;top:678px;width:73px;height:36px;"><span class="s" style="left:2px;top:2px;line-height:16px;letter-spacing:-0.245px;">4 x (Zone 3</span><span class="s" style="left:2px;top:17px;line-height:16px;letter-spacing:-0.194px;">Zone 1)</span></div>
<div class="c X" style="left:1091px;top:678px;width:150px;height:36px;"><span class="s" style="left:2px;top:2px;line-height:16px;letter-spacing:-0.202px;">4 x (05 minutes</span><span class="s" style="left:2px;top:17px;line-height:16px;letter-spacing:-0.154px;">03 minutes)</span></div>
<div class="c X" style="left:1241px;top:678px;width:46px;height:36px;"><span class="s" style="left:2px;top:2px;line-height:16px;letter-spacing:-0.226px;">Zone 2</span></div>
<div class="c X" style="left:1287px;top:678px;width:89px;height:36px;"><span class="s" style="left:2px;top:2px;line-height:16px;letter-spacing:-0.17px;">05 minutes</span></div>
<div class="c G" style="left:520px;top:714px;width:67px;height:21px;"><span class="s" style="left:0px;top:2px;line-height:16px;letter-spacing:-0.338px;left:auto;right:3px">2015-09-16</span></div>
<div class="c G" style="left:587px;top:714px;width:121px;height:21px;"><span class="s" style="left:2px;top:2px;line-height:16px;letter-spacing:-0.028px;">Foundation Run</span></div>
<div class="c G" style="left:708px;top:714px;width:40px;height:21px;"><span class="s" style="left:2px;top:2px;line-height:16px;letter-spacing:-0.673px;">4</span></div>
<div class="c G" style="left:748px;top:714px;width:46px;height:21px;"><span class="s" style="left:2px;top:2px;line-height:16px;letter-spacing:-0.226px;">Zone 1</span></div>
<div class="c G" style="left:794px;top:714px;width:89px;height:21px;"><span class="s" style="left:2px;top:2px;line-height:16px;letter-spacing:-0.17px;">05 minutes</span></div>
<div class="c G" style="left:883px;top:714px;width:46px;height:21px;"><span class="s" style="left:2px;top:2px;line-height:16px;letter-spacing:-0.226px;">Zone 2</span></div>
<div class="c G" style="left:929px;top:714px;width:89px;height:21px;"><span class="s" style="left:2px;top:2px;line-height:16px;letter-spacing:-0.17px;">25 minutes</span></div>
<div class="c G" style="left:1018px;top:714px;width:73px;height:21px;"><span class="s" style="left:2px;top:2px;line-height:16px;letter-spacing:-0.226px;">Zone 1</span></div>
<div class="c G" style="left:1091px;top:714px;width:150px;height:21px;"><span class="s" style="left:2px;top:2px;line-height:16px;letter-spacing:-0.17px;">05 minutes</span></div>
<div class="c W" style="left:1241px;top:714px;width:46px;height:21px;"></div>
<div class="c W" style="left:1287px;top:714px;width:89px;height:21px;"></div>
<div class="c G" style="left:520px;top:735px;width:67px;height:21px;"><span class="s" style="left:0px;top:2px;line-height:16px;letter-spacing:-0.338px;left:auto;right:3px">2015-09-17</span></div>
<div class="c G" style="left:587px;top:735px;width:121px;height:21px;"><span class="s" style="left:2px;top:2px;line-height:16px;letter-spacing:-0.028px;">Foundation Run</span></div>
<div class="c G" style="left:708px;top:735px;width:40px;height:21px;"><span class="s" style="left:2px;top:2px;line-height:16px;letter-spacing:-0.673px;">4</span></div>
<div class="c G" style="left:748px;top:735px;width:46px;height:21px;"><span class="s" style="left:2px;top:2px;line-height:16px;letter-spacing:-0.226px;">Zone 1</span></div>
<div class="c G" style="left:794px;top:735px;width:89px;height:21px;"><span class="s" style="left:2px;top:2px;line-height:16px;letter-spacing:-0.17px;">05 minutes</span></div>
<div class="c G" style="left:883px;top:735px;width:46px;height:21px;"><span class="s" style="left:2px;top:2px;line-height:16px;letter-spacing:-0.226px;">Zone 2</span></div>
<div class="c G" style="left:929px;top:735px;width:89px;height:21px;"><span class="s" style="left:2px;top:2px;line-height:16px;letter-spacing:-0.17px;">25 minutes</span></div>
<div class="c G" style="left:1018px;top:735px;width:73px;height:21px;"><span class="s" style="left:2px;top:2px;line-height:16px;letter-spacing:-0.226px;">Zone 1</span></div>
<div class="c G" style="left:1091px;top:735px;width:150px;height:21px;"><span class="s" style="left:2px;top:2px;line-height:16px;letter-spacing:-0.17px;">05 minutes</span></div>
<div class="c W" style="left:1241px;top:735px;width:46px;height:21px;"></div>
<div class="c W" style="left:1287px;top:735px;width:89px;height:21px;"></div>
<div class="c P" style="left:520px;top:756px;width:67px;height:21px;"><span class="s" style="left:0px;top:2px;line-height:16px;letter-spacing:-0.338px;left:auto;right:3px">2015-09-18</span></div>
<div class="c P" style="left:587px;top:756px;width:121px;height:21px;"><span class="s" style="left:2px;top:2px;line-height:16px;letter-spacing:-0.058px;">Mixed Interval Run</span></div>
<div class="c P" style="left:708px;top:756px;width:40px;height:21px;"><span class="s" style="left:2px;top:2px;line-height:16px;letter-spacing:-0.673px;">1</span></div>
<div class="c G" style="left:748px;top:756px;width:46px;height:21px;"><span class="s" style="left:2px;top:2px;line-height:16px;letter-spacing:-0.226px;">Zone 1</span></div>
<div class="c G" style="left:794px;top:756px;width:89px;height:21px;"><span class="s" style="left:2px;top:2px;line-height:16px;letter-spacing:-0.17px;">05 minutes</span></div>
<div class="c G" style="left:883px;top:756px;width:46px;height:21px;"><span class="s" style="left:2px;top:2px;line-height:16px;letter-spacing:-0.226px;">Zone 2</span></div>
<div class="c G" style="left:929px;top:756px;width:89px;height:21px;"><span class="s" style="left:2px;top:2px;line-height:16px;letter-spacing:-0.17px;">05 minutes</span></div>
<div class="c P" style="left:1018px;top:756px;width:73px;height:21px;"><span class="s" style="left:2px;top:2px;line-height:16px;letter-spacing:-0.226px;">Zone 5</span></div>
<div class="c P" style="left:1091px;top:756px;width:150px;height:21px;"><span class="s" style="left:2px;top:2px;line-height:16px;letter-spacing:-0.17px;">01 minutes</span></div>
<div class="c G" style="left:1241px;top:756px;width:46px;height:21px;"><span class="s" style="left:2px;top:2px;line-height:16px;letter-spacing:-0.226px;">Zone 1</span></div>
<div class="c G" style="left:1287px;top:756px;width:89px;height:21px;"><span class="s" style="left:2px;top:2px;line-height:16px;letter-spacing:-0.17px;">02 minutes</span></div>
<div class="c G" style="left:520px;top:777px;width:67px;height:21px;"><span class="s" style="left:0px;top:2px;line-height:16px;letter-spacing:-0.338px;left:auto;right:3px">2015-09-19</span></div>
<div class="c G" style="left:587px;top:777px;width:121px;height:21px;"><span class="s" style="left:2px;top:2px;line-height:16px;letter-spacing:-0.336px;">Recovery Run</span></div>
<div class="c G" style="left:708px;top:777px;width:40px;height:21px;"><span class="s" style="left:2px;top:2px;line-height:16px;letter-spacing:-0.673px;">4</span></div>
<div class="c G" style="left:748px;top:777px;width:46px;height:21px;"><span class="s" style="left:2px;top:2px;line-height:16px;letter-spacing:-0.226px;">Zone 1</span></div>
<div class="c G" style="left:794px;top:777px;width:89px;height:21px;"><span class="s" style="left:2px;top:2px;line-height:16px;letter-spacing:-0.17px;">35 minutes</span></div>
<div class="c W" style="left:883px;top:777px;width:46px;height:21px;"></div>
<div class="c W" style="left:929px;top:777px;width:89px;height:21px;"></div>
<div class="c W" style="left:1018px;top:777px;width:73px;height:21px;"></div>
<div class="c W" style="left:1091px;top:777px;width:150px;height:21px;"></div>
<div class="c W" style="left:1241px;top:777px;width:46px;height:21px;"></div>
<div class="c W" style="left:1287px;top:777px;width:89px;height:21px;"></div>
<div class="c Y" style="left:520px;top:798px;width:67px;height:21px;"><span class="s" style="left:0px;top:2px;line-height:16px;letter-spacing:-0.338px;left:auto;right:3px">2015-09-20</span></div>
<div class="c Y" style="left:587px;top:798px;width:121px;height:21px;"><span class="s" style="left:2px;top:2px;line-height:16px;letter-spacing:-0.253px;">Long Run Fast Finish</span></div>
<div class="c Y" style="left:708px;top:798px;width:40px;height:21px;"><span class="s" style="left:2px;top:2px;line-height:16px;letter-spacing:-0.673px;">1</span></div>
<div class="c G" style="left:748px;top:798px;width:46px;height:21px;"><span class="s" style="left:2px;top:2px;line-height:16px;letter-spacing:-0.226px;">Zone 1</span></div>
<div class="c G" style="left:794px;top:798px;width:89px;height:21px;"><span class="s" style="left:2px;top:2px;line-height:16px;letter-spacing:-0.384px;">0.80 km</span></div>
<div class="c G" style="left:883px;top:798px;width:46px;height:21px;"><span class="s" style="left:2px;top:2px;line-height:16px;letter-spacing:-0.226px;">Zone 2</span></div>
<div class="c G" style="left:929px;top:798px;width:89px;height:21px;"><span class="s" style="left:2px;top:2px;line-height:16px;letter-spacing:-0.336px;">14 km</span></div>
<div class="c Y" style="left:1018px;top:798px;width:73px;height:21px;"><span class="s" style="left:2px;top:2px;line-height:16px;letter-spacing:-0.226px;">Zone 3</span></div>
<div class="c Y" style="left:1091px;top:798px;width:150px;height:21px;"><span class="s" style="left:2px;top:2px;line-height:16px;letter-spacing:-0.251px;">2 km</span></div>
<div class="c W" style="left:1241px;top:798px;width:46px;height:21px;"></div>
<div class="c W" style="left:1287px;top:798px;width:89px;height:21px;"></div>
<div class="c L" style="left:520px;top:819px;width:67px;height:21px;"><span class="s" style="left:1px;top:2px;line-height:16px;letter-spacing:-0.448px;">Week 18</span></div>
<div class="c L" style="left:587px;top:819px;width:121px;height:21px;"><span class="s" style="left:2px;top:2px;line-height:16px;letter-spacing:-0.277px;">Taper phase</span></div>
<div class="c W" style="left:708px;top:819px;width:40px;height:21px;"></div>
<div class="c W" style="left:748px;top:819px;width:46px;height:21px;"></div>
<div class="c W" style="left:794px;top:819px;width:89px;height:21px;"></div>
<div class="c W" style="left:883px;top:819px;width:46px;height:21px;"></div>
<div class="c W" style="left:929px;top:819px;width:89px;height:21px;"></div>
<div class="c W" style="left:1018px;top:819px;width:73px;height:21px;"></div>
<div class="c W" style="left:1091px;top:819px;width:150px;height:21px;"></div>
<div class="c W" style="left:1241px;top:819px;width:46px;height:21px;"></div>
<div class="c W" style="left:1287px;top:819px;width:89px;height:21px;"></div>
<div class="c Y" style="left:520px;top:840px;width:67px;height:21px;"><span class="s" style="left:0px;top:2px;line-height:16px;letter-spacing:-0.338px;left:auto;right:3px">2015-09-22</span></div>
<div class="c Y" style="left:587px;top:840px;width:121px;height:21px;"><span class="s" style="left:2px;top:2px;line-height:16px;letter-spacing:-0.335px;">Fast Finish Run</span></div>
<div class="c Y" style="left:708px;top:840px;width:40px;height:21px;"><span class="s" style="left:2px;top:2px;line-height:16px;letter-spacing:-0.673px;">4</span></div>
<div class="c G" style="left:748px;top:840px;width:46px;height:21px;"><span class="s" style="left:2px;top:2px;line-height:16px;letter-spacing:-0.226px;">Zone 1</span></div>
<div class="c G" style="left:794px;top:840px;width:89px;height:21px;"><span class="s" style="left:2px;top:2px;line-height:16px;letter-spacing:-0.17px;">05 minutes</span></div>
<div class="c G" style="left:883px;top:840px;width:46px;height:21px;"><span class="s" style="left:2px;top:2px;line-height:16px;letter-spacing:-0.226px;">Zone 2</span></div>
<div class="c G" style="left:929px;top:840px;width:89px;height:21px;"><span class="s" style="left:2px;top:2px;line-height:16px;letter-spacing:-0.17px;">25 minutes</span></div>
<div class="c Y" style="left:1018px;top:840px;width:73px;height:21px;"><span class="s" style="left:2px;top:2px;line-height:16px;letter-spacing:-0.226px;">Zone 3</span></div>
<div class="c Y" style="left:1091px;top:840px;width:150px;height:21px;"><span class="s" style="left:2px;top:2px;line-height:16px;letter-spacing:-0.17px;">10 minutes</span></div>
<div class="c W" style="left:1241px;top:840px;width:46px;height:21px;"></div>
<div class="c W" style="left:1287px;top:840px;width:89px;height:21px;"></div>
<div class="c G" style="left:520px;top:861px;width:67px;height:21px;"><span class="s" style="left:0px;top:2px;line-height:16px;letter-spacing:-0.338px;left:auto;right:3px">2015-09-23</span></div>
<div class="c G" style="left:587px;top:861px;width:121px;height:21px;"><span class="s" style="left:2px;top:2px;line-height:16px;letter-spacing:-0.028px;">Foundation Run</span></div>
<div class="c G" style="left:708px;top:861px;width:40px;height:21px;"><span class="s" style="left:2px;top:2px;line-height:16px;letter-spacing:-0.673px;">3</span></div>
<div class="c G" style="left:748px;top:861px;width:46px;height:21px;"><span class="s" style="left:2px;top:2px;line-height:16px;letter-spacing:-0.226px;">Zone 1</span></div>
<div class="c G" style="left:794px;top:861px;width:89px;height:21px;"><span class="s" style="left:2px;top:2px;line-height:16px;letter-spacing:-0.17px;">05 minutes</span></div>
<div class="c G" style="left:883px;top:861px;width:46px;height:21px;"><span class="s" style="left:2px;top:2px;line-height:16px;letter-spacing:-0.226px;">Zone 2</span></div>
<div class="c G" style="left:929px;top:861px;width:89px;height:21px;"><span class="s" style="left:2px;top:2px;line-height:16px;letter-spacing:-0.17px;">20 minutes</span></div>
<div class="c G" style="left:1018px;top:861px;width:73px;height:21px;"><span class="s" style="left:2px;top:2px;line-height:16px;letter-spacing:-0.226px;">Zone 1</span></div>
<div class="c G" style="left:1091px;top:861px;width:150px;height:21px;"><span class="s" style="left:2px;top:2px;line-height:16px;letter-spacing:-0.17px;">05 minutes</span></div>
<div class="c W" style="left:1241px;top:861px;width:46px;height:21px;"></div>
<div class="c W" style="left:1287px;top:861px;width:89px;height:21px;"></div>
<div class="c G" style="left:520px;top:882px;width:67px;height:21px;"><span class="s" style="left:0px;top:2px;line-height:16px;letter-spacing:-0.338px;left:auto;right:3px">2015-09-24</span></div>
<div class="c G" style="left:587px;top:882px;width:121px;height:21px;"><span class="s" style="left:2px;top:2px;line-height:16px;letter-spacing:-0.028px;">Foundation Run</span></div>
<div class="c G" style="left:708px;top:882px;width:40px;height:21px;"><span class="s" style="left:2px;top:2px;line-height:16px;letter-spacing:-0.673px;">3</span></div>
<div class="c G" style="left:748px;top:882px;width:46px;height:21px;"><span class="s" style="left:2px;top:2px;line-height:16px;letter-spacing:-0.226px;">Zone 1</span></div>
<div class="c G" style="left:794px;top:882px;width:89px;height:21px;"><span class="s" style="left:2px;top:2px;line-height:16px;letter-spacing:-0.17px;">05 minutes</span></div>
<div class="c G" style="left:883px;top:882px;width:46px;height:21px;"><span class="s" style="left:2px;top:2px;line-height:16px;letter-spacing:-0.226px;">Zone 2</span></div>
<div class="c G" style="left:929px;top:882px;width:89px;height:21px;"><span class="s" style="left:2px;top:2px;line-height:16px;letter-spacing:-0.17px;">20 minutes</span></div>
<div class="c G" style="left:1018px;top:882px;width:73px;height:21px;"><span class="s" style="left:2px;top:2px;line-height:16px;letter-spacing:-0.226px;">Zone 1</span></div>
<div class="c G" style="left:1091px;top:882px;width:150px;height:21px;"><span class="s" style="left:2px;top:2px;line-height:16px;letter-spacing:-0.17px;">05 minutes</span></div>
<div class="c W" style="left:1241px;top:882px;width:46px;height:21px;"></div>
<div class="c W" style="left:1287px;top:882px;width:89px;height:21px;"></div>
<div class="c P" style="left:520px;top:903px;width:67px;height:36px;"><span class="s" style="left:0px;top:2px;line-height:16px;letter-spacing:-0.338px;left:auto;right:3px">2015-09-25</span></div>
<div class="c P" style="left:587px;top:903px;width:121px;height:36px;"><span class="s" style="left:2px;top:2px;line-height:16px;letter-spacing:-0.409px;">Speed Play Run</span></div>
<div class="c P" style="left:708px;top:903px;width:40px;height:36px;"><span class="s" style="left:2px;top:2px;line-height:16px;letter-spacing:-0.673px;">3</span></div>
<div class="c G" style="left:748px;top:903px;width:46px;height:36px;"><span class="s" style="left:2px;top:2px;line-height:16px;letter-spacing:-0.226px;">Zone 1</span></div>
<div class="c G" style="left:794px;top:903px;width:89px;height:36px;"><span class="s" style="left:2px;top:2px;line-height:16px;letter-spacing:-0.17px;">05 minutes</span></div>
<div class="c G" style="left:883px;top:903px;width:46px;height:36px;"><span class="s" style="left:2px;top:2px;line-height:16px;letter-spacing:-0.226px;">Zone 2</span></div>
<div class="c G" style="left:929px;top:903px;width:89px;height:36px;"><span class="s" style="left:2px;top:2px;line-height:16px;letter-spacing:-0.17px;">05 minutes</span></div>
<div class="c P" style="left:1018px;top:903px;width:73px;height:36px;"><span class="s" style="left:2px;top:2px;line-height:16px;letter-spacing:-0.245px;">4 x (Zone 4</span><span class="s" style="left:2px;top:17px;line-height:16px;letter-spacing:-0.194px;">Zone 1)</span></div>
<div class="c P" style="left:1091px;top:903px;width:150px;height:36px;"><span class="s" style="left:2px;top:2px;line-height:16px;letter-spacing:-0.202px;">4 x (02 minutes</span><span class="s" style="left:2px;top:17px;line-height:16px;letter-spacing:-0.154px;">02 minutes)</span></div>
<div class="c G" style="left:1241px;top:903px;width:46px;height:36px;"><span class="s" style="left:2px;top:2px;line-height:16px;letter-spacing:-0.226px;">Zone 1</span></div>
<div class="c G" style="left:1287px;top:903px;width:89px;height:36px;"><span class="s" style="left:2px;top:2px;line-height:16px;letter-spacing:-0.17px;">05 minutes</span></div>
<div class="c G" style="left:520px;top:939px;width:67px;height:21px;"><span class="s" style="left:0px;top:2px;line-height:16px;letter-spacing:-0.338px;left:auto;right:3px">2015-09-26</span></div>
<div class="c G" style="left:587px;top:939px;width:121px;height:21px;"><span class="s" style="left:2px;top:2px;line-height:16px;letter-spacing:-0.336px;">Recovery Run</span></div>
<div class="c G" style="left:708px;top:939px;width:40px;height:21px;"><span class="s" style="left:2px;top:2px;line-height:16px;letter-spacing:-0.673px;">1</span></div>
<div class="c G" style="left:748px;top:939px;width:46px;height:21px;"><span class="s" style="left:2px;top:2px;line-height:16px;letter-spacing:-0.226px;">Zone 1</span></div>
<div class="c G" style="left:794px;top:939px;width:89px;height:21px;"><span class="s" style="left:2px;top:2px;line-height:16px;letter-spacing:-0.17px;">20 minutes</span></div>
<div class="c W" style="left:883px;top:939px;width:46px;height:21px;"></div>
<div class="c W" style="left:929px;top:939px;width:89px;height:21px;"></div>
<div class="c W" style="left:1018px;top:939px;width:73px;height:21px;"></div>
<div class="c W" style="left:1091px;top:939px;width:150px;height:21px;"></div>
<div class="c W" style="left:1241px;top:939px;width:46px;height:21px;"></div>
<div class="c W" style="left:1287px;top:939px;width:89px;height:21px;"></div>
<div class="c P" style="left:520px;top:960px;width:67px;height:21px;"><span class="s" style="left:0px;top:2px;line-height:16px;letter-spacing:-0.338px;left:auto;right:3px">2015-09-27</span></div>
<div class="c P" style="left:587px;top:960px;width:121px;height:21px;"><span class="s" style="left:2px;top:2px;line-height:16px;letter-spacing:0.163px;">Marathon</span></div>
<div class="c P" style="left:708px;top:960px;width:40px;height:21px;"><span class="s" style="left:2px;top:2px;line-height:16px;letter-spacing:-0.673px;">1</span></div>
<div class="c W" style="left:748px;top:960px;width:46px;height:21px;"></div>
<div class="c W" style="left:794px;top:960px;width:89px;height:21px;"></div>
<div class="c W" style="left:883px;top:960px;width:46px;height:21px;"></div>
<div class="c W" style="left:929px;top:960px;width:89px;height:21px;"></div>
<div class="c W" style="left:1018px;top:960px;width:73px;height:21px;"></div>
<div class="c W" style="left:1091px;top:960px;width:150px;height:21px;"></div>
<div class="c W" style="left:1241px;top:960px;width:46px;height:21px;"></div>
<div class="c W" style="left:1287px;top:960px;width:89px;height:21px;"></div></div></div>
<div class="sb" style="left:1351px;top:241px;width:17px;height:759px;"></div>
<div class="tri" style="left:1356.0px;top:247.5px;border-left:4px solid transparent;border-right:4px solid transparent;border-bottom:4px solid #505050"></div>
<div class="tri" style="left:1356.0px;top:989.5px;border-left:4px solid transparent;border-right:4px solid transparent;border-top:4px solid #505050"></div>
<div class="thumb" style="left:1352px;top:821px;width:15px;height:160px;"></div>
<div style="left:1356.0px;top:897.0px;width:8px;height:1px;background:#606060;box-shadow:0 1px 0 #fff"></div>
<div style="left:1356.0px;top:900.0px;width:8px;height:1px;background:#606060;box-shadow:0 1px 0 #fff"></div>
<div style="left:1356.0px;top:903.0px;width:8px;height:1px;background:#606060;box-shadow:0 1px 0 #fff"></div>
<div class="sb" style="left:520px;top:1000px;width:831px;height:16px;"></div>
<div class="tri" style="left:526.0px;top:1004.0px;border-top:4px solid transparent;border-bottom:4px solid transparent;border-right:4px solid #505050"></div>
<div class="tri" style="left:1340.0px;top:1004.0px;border-top:4px solid transparent;border-bottom:4px solid transparent;border-left:4px solid #505050"></div>
<div class="thumbh" style="left:537px;top:1001px;width:327px;height:14px;"></div>
<div style="left:696.5px;top:1004.0px;width:1px;height:8px;background:#606060;box-shadow:1px 0 0 #fff"></div>
<div style="left:699.5px;top:1004.0px;width:1px;height:8px;background:#606060;box-shadow:1px 0 0 #fff"></div>
<div style="left:702.5px;top:1004.0px;width:1px;height:8px;background:#606060;box-shadow:1px 0 0 #fff"></div>
<div class="sb" style="left:1351px;top:1000px;width:17px;height:16px;"></div></div></div>
<div style="left:527px;top:222px;width:20px;height:1px;background:#de5a5a;border-radius:1px 1px 0 0;opacity:.85"></div><svg viewBox="0 0 22 17" preserveAspectRatio="none" width="22" height="17" style="position:absolute;left:526px;top:224px"><defs><linearGradient id="rg4" x1="0" y1="0" x2="0" y2="1"><stop offset="0" stop-color="#a30606"/><stop offset="1" stop-color="#6a0008"/></linearGradient></defs><rect width="22" height="17" rx="1.2" fill="url(#rg4)"/><g fill="#fff"><circle cx="12.65" cy="1.5" r="1.05"/><path d="M12 2.500L10.600 3.200L9 4.600L9.300 6.600L9.900 6.500L9.800 5L10.900 4.200L11 8L10.800 9.400L9.600 11L7 10.400L5.200 10.900L5 11.600L5.800 11.800L7.200 11.400L10 12.200L12.200 10.200L13.500 12.200L14.300 14.900L16.600 15.900L16.800 15.200L15.300 14.400L14.800 12L13.700 9L13.800 5.200L15.800 5.900L16 5.200L14.200 4.200L13.600 3L13 2.500Z"/></g></svg>
<div class="pnl" style="left:1373px;top:42px;width:547px;height:577px;border-left-width:2px">
<div class="hd"></div>
<div style="left:516px;top:3px;width:9px;height:9px;border:1px solid #000"></div>
<div style="left:516px;top:5px;width:9px;height:1px;background:#000"></div><svg style="left:531px;top:4px" width="8" height="7" viewBox="0 0 8 7"><path d="M.7 .4L7.3 6.6M7.3 .4L.7 6.6" stroke="#000" stroke-width="1.6" fill="none"/></svg><span class="a" style="left:37px;top:-1px;line-height:16px;">Training types</span>
<div style="left:-1375px;top:-43px;width:1920px;height:1040px">
<div class="th" style="left:1375px;top:61px;width:191px;height:31px;"></div>
<div class="th" style="left:1566px;top:61px;width:353px;height:31px;"><span class="b ct" style="left:0px;top:6.5px;line-height:16px;">Description</span></div>
<div class="th" style="left:1375px;top:92px;width:191px;height:21px;"><span class="b ct" style="left:0px;top:2.5px;line-height:16px;">Rest</span></div>
<div class="c G" style="left:1566px;top:92px;width:353px;height:21px;"><span class="s" style="left:2px;top:2px;line-height:16px;letter-spacing:0.15px;">No activity</span></div>
<div class="th" style="left:1375px;top:113px;width:191px;height:36px;"><span class="b ct" style="left:0px;top:10px;line-height:16px;">Recovery Run</span></div>
<div class="c G" style="left:1566px;top:113px;width:353px;height:36px;"><span class="s" style="left:2px;top:2px;line-height:16px;letter-spacing:-0.015px;">Zone 1 only. The day after challenging workout.</span><span class="s" style="left:2px;top:17px;line-height:16px;letter-spacing:-0.061px;">An alternative to a day off. Increases running volume.</span></div>
<div class="th" style="left:1375px;top:149px;width:191px;height:36px;"><span class="b ct" style="left:0px;top:10px;line-height:16px;">Foundation Run</span></div>
<div class="c G" style="left:1566px;top:149px;width:353px;height:36px;"><span class="s" style="left:2px;top:2px;line-height:16px;letter-spacing:-0.046px;">The bread and butter of 80/20 training.</span><span class="s" style="left:2px;top:17px;line-height:16px;letter-spacing:0.01px;">Ensures that you do enough low intensity running.</span></div>
<div class="th" style="left:1375px;top:185px;width:191px;height:36px;"><span class="b ct" style="left:0px;top:10px;line-height:16px;">Long Run</span></div>
<div class="c G" style="left:1566px;top:185px;width:353px;height:36px;"><span class="s" style="left:2px;top:2px;line-height:16px;letter-spacing:-0.021px;">Extended foundation run. Measured in distance to enforce</span><span class="s" style="left:2px;top:17px;line-height:16px;letter-spacing:-0.086px;">endurance for the entire race distance regardless of training level.</span></div>
<div class="th" style="left:1375px;top:221px;width:191px;height:36px;"><span class="b ct" style="left:0px;top:10px;line-height:16px;">Fast Finish Run</span></div>
<div class="c Y" style="left:1566px;top:221px;width:353px;height:36px;"><span class="s" style="left:2px;top:2px;line-height:16px;letter-spacing:-0.003px;">A relatively short Zone 3 at the end of a foundation</span><span class="s" style="left:2px;top:17px;line-height:16px;letter-spacing:-0.068px;">run. Provides some quality during base and recovery training.</span></div>
<div class="th" style="left:1375px;top:257px;width:191px;height:36px;"><span class="b ct" style="left:0px;top:10px;line-height:16px;">Tempo Run</span></div>
<div class="c Y" style="left:1566px;top:257px;width:353px;height:36px;"><span class="s" style="left:2px;top:2px;line-height:16px;letter-spacing:0.017px;">Zone 3 with warm up and cool down.</span><span class="s" style="left:2px;top:17px;line-height:16px;letter-spacing:-0.244px;">Improves sustained aggressive speed.</span></div>
<div class="th" style="left:1375px;top:293px;width:191px;height:36px;"><span class="b ct" style="left:0px;top:10px;line-height:16px;">Cruise Interval Run</span></div>
<div class="c Y" style="left:1566px;top:293px;width:353px;height:36px;"><span class="s" style="left:2px;top:2px;line-height:16px;letter-spacing:-0.016px;">Multiple long intervals with Zone 1 recoveries.</span><span class="s" style="left:2px;top:17px;line-height:16px;letter-spacing:0.015px;">Allows more total work than tempo runs.</span></div>
<div class="th" style="left:1375px;top:329px;width:191px;height:36px;"><span class="b ct" style="left:0px;top:10px;line-height:16px;">Long Run Speed Play</span></div>
<div class="c Y" style="left:1566px;top:329px;width:353px;height:36px;"><span class="s" style="left:2px;top:2px;line-height:16px;letter-spacing:-0.047px;">Short bursts in Zone 3 sprinkled in long run.</span><span class="s" style="left:2px;top:17px;line-height:16px;letter-spacing:-0.087px;">Done late in training cycle to increase fatigue resistance.</span></div>
<div class="th" style="left:1375px;top:365px;width:191px;height:36px;"><span class="b ct" style="left:0px;top:10px;line-height:16px;">Long Run Fast Finish</span></div>
<div class="c Y" style="left:1566px;top:365px;width:353px;height:36px;"><span class="s" style="left:2px;top:2px;line-height:16px;letter-spacing:-0.024px;">Fast finish at end of long run.</span><span class="s" style="left:2px;top:17px;line-height:16px;letter-spacing:-0.087px;">Done late in training cycle to increase fatigue resistance.</span></div>
<div class="th" style="left:1375px;top:401px;width:191px;height:36px;"><span class="b ct" style="left:0px;top:10px;line-height:16px;">Speed Play Run</span></div>
<div class="c P" style="left:1566px;top:401px;width:353px;height:36px;"><span class="s" style="left:2px;top:2px;line-height:16px;letter-spacing:-0.032px;">Cross between foundation run and interval run.</span><span class="s" style="left:2px;top:17px;line-height:16px;letter-spacing:-0.182px;">Easier than interval runs.</span></div>
<div class="th" style="left:1375px;top:437px;width:191px;height:51px;"><span class="b ct" style="left:0px;top:17.5px;line-height:16px;">Hill Repetition Run</span></div>
<div class="c P" style="left:1566px;top:437px;width:353px;height:51px;"><span class="s" style="left:2px;top:2px;line-height:16px;letter-spacing:-0.002px;">Short uphill interval runs.</span><span class="s" style="left:2px;top:17px;line-height:16px;letter-spacing:-0.118px;">Bridge between base and peak training.</span><span class="s" style="left:2px;top:32px;line-height:16px;letter-spacing:-0.155px;">Less stressful on the legs than interval runs.</span></div>
<div class="th" style="left:1375px;top:488px;width:191px;height:51px;"><span class="b ct" style="left:0px;top:17.5px;line-height:16px;">Short Interval Run</span></div>
<div class="c P" style="left:1566px;top:488px;width:353px;height:51px;"><span class="s" style="left:2px;top:2px;line-height:16px;letter-spacing:-0.133px;">Intensive short Zone 5 with Zone 1 recoveries.</span><span class="s" style="left:2px;top:17px;line-height:16px;letter-spacing:-0.095px;">Enhances aerobic capacity, fatigue</span><span class="s" style="left:2px;top:32px;line-height:16px;letter-spacing:-0.028px;">resistance and running economy.</span></div>
<div class="th" style="left:1375px;top:539px;width:191px;height:36px;"><span class="b ct" style="left:0px;top:10px;line-height:16px;">Long Interval Run</span></div>
<div class="c P" style="left:1566px;top:539px;width:353px;height:36px;"><span class="s" style="left:2px;top:2px;line-height:16px;letter-spacing:-0.144px;">Zone 4 intervals with Zone 1 recoveries.</span><span class="s" style="left:2px;top:17px;line-height:16px;letter-spacing:-0.039px;">Maximizes high-intensity fatigue resistance..</span></div>
<div class="th" style="left:1375px;top:575px;width:191px;height:36px;"><span class="b ct" style="left:0px;top:10px;line-height:16px;">Mixed Interval Run</span></div>
<div class="c P" style="left:1566px;top:575px;width:353px;height:36px;"><span class="s" style="left:2px;top:2px;line-height:16px;letter-spacing:-0.072px;">Sharpens the runner up for racing after</span><span class="s" style="left:2px;top:17px;line-height:16px;letter-spacing:0.123px;">obtaining a solid foundation.</span></div>
<div style="left:1375px;top:611px;width:191px;height:8px;background:#f0f0f0"></div>
<div style="left:1375px;top:60px;width:545px;height:1px;background:#a8a8a8"></div></div></div><svg viewBox="0 0 22 17" preserveAspectRatio="none" width="22" height="17" style="position:absolute;left:1381px;top:43px"><defs><linearGradient id="rg5" x1="0" y1="0" x2="0" y2="1"><stop offset="0" stop-color="#a30606"/><stop offset="1" stop-color="#6a0008"/></linearGradient></defs><rect width="22" height="17" rx="1.2" fill="url(#rg5)"/><g fill="#fff"><circle cx="12.65" cy="1.5" r="1.05"/><path d="M12 2.500L10.600 3.200L9 4.600L9.300 6.600L9.900 6.500L9.800 5L10.900 4.200L11 8L10.800 9.400L9.600 11L7 10.400L5.200 10.900L5 11.600L5.800 11.800L7.200 11.400L10 12.200L12.200 10.200L13.500 12.200L14.300 14.900L16.600 15.900L16.800 15.200L15.300 14.400L14.800 12L13.700 9L13.800 5.200L15.800 5.900L16 5.200L14.200 4.200L13.600 3L13 2.500Z"/></g></svg>
<div class="pnl" style="left:1373px;top:623px;width:547px;height:209px;border-left-width:2px">
<div class="hd"></div>
<div style="left:516px;top:3px;width:9px;height:9px;border:1px solid #000"></div>
<div style="left:516px;top:5px;width:9px;height:1px;background:#000"></div><svg style="left:531px;top:4px" width="8" height="7" viewBox="0 0 8 7"><path d="M.7 .4L7.3 6.6M7.3 .4L.7 6.6" stroke="#000" stroke-width="1.6" fill="none"/></svg><span class="a" style="left:37px;top:-1px;line-height:16px;">Help</span>
<div style="left:-1375px;top:-624px;width:1920px;height:1040px">
<div style="left:1375px;top:641px;width:544px;height:32px;background:#f0f0f0;border-bottom:1px solid #c8c8c8"></div>
<div style="left:1382px;top:649px;width:14px;height:14px;border:1px solid #000;background:#fff"></div>
<div style="left:1386px;top:650px;width:1px;height:12px;background:#000"></div>
<div style="left:1389px;top:652px;width:5px;height:1px;background:#000"></div>
<div style="left:1383px;top:652px;width:3px;height:1px;background:#1030d0"></div>
<div style="left:1389px;top:655px;width:5px;height:1px;background:#000"></div>
<div style="left:1383px;top:655px;width:3px;height:1px;background:#1030d0"></div>
<div style="left:1389px;top:658px;width:5px;height:1px;background:#000"></div>
<div style="left:1383px;top:658px;width:3px;height:1px;background:#1030d0"></div>
<div style="left:1389px;top:661px;width:5px;height:1px;background:#000"></div>
<div style="left:1383px;top:661px;width:3px;height:1px;background:#1030d0"></div><svg style="left:1418px;top:647px" width="18" height="18" viewBox="0 0 18 18"><g transform="rotate(180 9 9)"><path d="M1.500 5 H8.300 V1.200 L16.800 9 L8.300 16.800 V13 H1.500Z" fill="#5ab40c" stroke="#3a8a08" stroke-width="1.100" stroke-linejoin="round"/><path d="M2.700 6.200 H9.500 V4 L13.600 7.800" fill="none" stroke="#a6e060" stroke-width="1.200"/></g></svg><svg style="left:1450px;top:647px" width="18" height="18" viewBox="0 0 18 18"><g transform="rotate(0 9 9)"><path d="M1.500 5 H8.300 V1.200 L16.800 9 L8.300 16.800 V13 H1.500Z" fill="#5ab40c" stroke="#3a8a08" stroke-width="1.100" stroke-linejoin="round"/><path d="M2.700 6.200 H9.500 V4 L13.600 7.800" fill="none" stroke="#a6e060" stroke-width="1.200"/></g></svg><svg style="left:1490px;top:648px" width="16" height="16" viewBox="0 0 16 16"><path d="M7 1.500 L1.500 7 H4 V14 H13.500 V8 H10 V5Z" fill="#fff" stroke="#000" stroke-width="1.200" stroke-linejoin="miter"/></svg><svg style="left:1520px;top:648px" width="18" height="18" viewBox="0 0 18 18"><g transform="rotate(270 9 9)"><path d="M1.500 5 H8.300 V1.200 L16.800 9 L8.300 16.800 V13 H1.500Z" fill="#5ab40c" stroke="#3a8a08" stroke-width="1.100" stroke-linejoin="round"/><path d="M2.700 6.200 H9.500 V4 L13.600 7.800" fill="none" stroke="#a6e060" stroke-width="1.200"/></g></svg><svg style="left:1551px;top:646px" width="18" height="18" viewBox="0 0 18 18"><g transform="rotate(90 9 9)"><path d="M1.500 5 H8.300 V1.200 L16.800 9 L8.300 16.800 V13 H1.500Z" fill="#5ab40c" stroke="#3a8a08" stroke-width="1.100" stroke-linejoin="round"/><path d="M2.700 6.200 H9.500 V4 L13.600 7.800" fill="none" stroke="#a6e060" stroke-width="1.200"/></g></svg><svg style="left:1588px;top:645px" width="22" height="22" viewBox="0 0 22 22"><rect x="5.500" y="1.500" width="11" height="9" fill="#f6f6f6" stroke="#a4a4a4"/><path d="M11 3 L13.500 6 H12 V8 H10 V6 H8.500Z" fill="#8a8a8a"/><path d="M3 9.500 H19 Q20.500 9.500 20.500 11.500 V17 Q20.500 18.500 19 18.500 H3 Q1.500 18.500 1.500 17 V11.500 Q1.500 9.500 3 9.500Z" fill="#c9c9c9" stroke="#8e8e8e"/><rect x="2.500" y="10.500" width="17" height="2.500" fill="#efefef"/><rect x="3.500" y="15" width="15" height="4.500" rx="1" fill="#e9e9e9" stroke="#9c9c9c"/></svg><span style="left:1630px;top:644px;font:bold 20px/24px 'Liberation Serif',serif;color:#000">A</span>
<div style="left:1375px;top:673px;width:526px;height:139px;overflow:hidden;background:#fff">
<div style="left:-1375px;top:-673px;width:1920px;height:1040px"><span style="left:1386px;top:676px;font:bold 20px/28px 'Liberation Sans',sans-serif;letter-spacing:-.15px">Use calendar in other apps.</span><span style="left:1386px;top:721.5px;font:12px/15px 'Liberation Sans',sans-serif;color:#111;letter-spacing:0.1px">Your training program can be exported to a *.csv file by selecting <i>File-&gt;Save training</i></span><span style="left:1386px;top:736.5px;font:12px/15px 'Liberation Sans',sans-serif;color:#111;letter-spacing:0.1px"><i>calendar...</i> in the menu. This file can be imported in e.g. Google calendar so that you have</span><span style="left:1386px;top:751.5px;font:12px/15px 'Liberation Sans',sans-serif;color:#111;letter-spacing:0.25px">your training plan available wherever you are. Follow these steps to import the *.csv file to</span><span style="left:1386px;top:766.5px;font:12px/15px 'Liberation Sans',sans-serif;color:#111;letter-spacing:0.15px">Google Calendar:</span><span style="left:1410px;top:786px;font:8px/15px 'DejaVu Sans',sans-serif">◆</span><span style="left:1422px;top:785px;font:12px/15px 'Liberation Sans',sans-serif;color:#111;letter-spacing:.1px">Open Google Calendar on a computer.</span><span style="left:1411px;top:808px;font:6px/15px 'DejaVu Sans',sans-serif">◆</span><span style="left:1422px;top:805px;font:12px/15px 'Liberation Sans',sans-serif;color:#111;letter-spacing:.1px">Click on the arrow to the right of &quot;My Calendars&quot; and select &quot;Create New Calendar&quot;.</span></div></div>
<div class="sb" style="left:1901px;top:673px;width:16px;height:139px;"></div>
<div class="tri" style="left:1905.5px;top:679.5px;border-left:4px solid transparent;border-right:4px solid transparent;border-bottom:4px solid #505050"></div>
<div class="tri" style="left:1905.5px;top:801.5px;border-left:4px solid transparent;border-right:4px solid transparent;border-top:4px solid #505050"></div>
<div class="thumb" style="left:1902px;top:696px;width:14px;height:15px;"></div>
<div style="left:1917px;top:673px;width:2px;height:140px;background:#fff"></div>
<div class="sb" style="left:1375px;top:813px;width:526px;height:16px;"></div>
<div class="tri" style="left:1381.0px;top:817.0px;border-top:4px solid transparent;border-bottom:4px solid transparent;border-right:4px solid #505050"></div>
<div class="tri" style="left:1890.0px;top:817.0px;border-top:4px solid transparent;border-bottom:4px solid transparent;border-left:4px solid #505050"></div>
<div class="thumbh" style="left:1394px;top:814px;width:304px;height:14px;"></div>
<div style="left:1542.0px;top:817.0px;width:1px;height:8px;background:#606060;box-shadow:1px 0 0 #fff"></div>
<div style="left:1545.0px;top:817.0px;width:1px;height:8px;background:#606060;box-shadow:1px 0 0 #fff"></div>
<div style="left:1548.0px;top:817.0px;width:1px;height:8px;background:#606060;box-shadow:1px 0 0 #fff"></div>
<div class="sb" style="left:1901px;top:813px;width:17px;height:17px;"></div></div></div>
<div style="left:1382px;top:622px;width:20px;height:1px;background:#de5a5a;border-radius:1px 1px 0 0;opacity:.85"></div><svg viewBox="0 0 22 17" preserveAspectRatio="none" width="22" height="17" style="position:absolute;left:1381px;top:624px"><defs><linearGradient id="rg6" x1="0" y1="0" x2="0" y2="1"><stop offset="0" stop-color="#a30606"/><stop offset="1" stop-color="#6a0008"/></linearGradient></defs><rect width="22" height="17" rx="1.2" fill="url(#rg6)"/><g fill="#fff"><circle cx="12.65" cy="1.5" r="1.05"/><path d="M12 2.500L10.600 3.200L9 4.600L9.300 6.600L9.900 6.500L9.800 5L10.900 4.200L11 8L10.800 9.400L9.600 11L7 10.400L5.200 10.900L5 11.600L5.800 11.800L7.200 11.400L10 12.200L12.200 10.200L13.500 12.200L14.300 14.900L16.600 15.900L16.800 15.200L15.300 14.400L14.800 12L13.700 9L13.800 5.200L15.800 5.900L16 5.200L14.200 4.200L13.600 3L13 2.500Z"/></g></svg>
<div class="pnl" style="left:1373px;top:835px;width:547px;height:182px;border-left-width:2px">
<div class="hd"></div>
<div style="left:516px;top:3px;width:9px;height:9px;border:1px solid #000"></div>
<div style="left:516px;top:5px;width:9px;height:1px;background:#000"></div><svg style="left:531px;top:4px" width="8" height="7" viewBox="0 0 8 7"><path d="M.7 .4L7.3 6.6M7.3 .4L.7 6.6" stroke="#000" stroke-width="1.6" fill="none"/></svg><span class="a" style="left:37px;top:-1px;line-height:16px;">Training Tuesday 2015-09-15</span>
<div style="left:-1375px;top:-836px;width:1920px;height:1040px">
<div class="th" style="left:1375px;top:854px;width:81px;height:21px;"><span class="b ct" style="left:0px;top:2.5px;line-height:16px;">Date</span></div>
<div class="c P" style="left:1456px;top:854px;width:115px;height:21px;"><span class="s" style="left:3px;top:2px;line-height:16px;letter-spacing:-0.35px;">Tuesday 2015-09-15</span></div>
<div class="th" style="left:1375px;top:875px;width:81px;height:21px;"><span class="b ct" style="left:0px;top:2.5px;line-height:16px;">Training</span></div>
<div class="c Y" style="left:1456px;top:875px;width:115px;height:21px;"><span class="s" style="left:3px;top:2px;line-height:16px;letter-spacing:-0.248px;">Cruise Interval Run</span></div>
<div class="th" style="left:1375px;top:896px;width:81px;height:21px;"><span class="b ct" style="left:0px;top:2.5px;line-height:16px;">Level</span></div>
<div class="c Y" style="left:1456px;top:896px;width:115px;height:21px;"><span class="s" style="left:2px;top:2px;line-height:16px;letter-spacing:-0.673px;">1</span></div>
<div class="th" style="left:1375px;top:917px;width:81px;height:21px;"><span class="b ct" style="left:0px;top:2.5px;line-height:16px;">Zone 1</span></div>
<div class="c G" style="left:1456px;top:917px;width:115px;height:21px;"><span class="s" style="left:2px;top:2px;line-height:16px;letter-spacing:-0.17px;">05 minutes</span></div>
<div class="th" style="left:1375px;top:938px;width:81px;height:21px;"><span class="b ct" style="left:0px;top:2.5px;line-height:16px;">Zone 2</span></div>
<div class="c G" style="left:1456px;top:938px;width:115px;height:21px;"><span class="s" style="left:2px;top:2px;line-height:16px;letter-spacing:-0.17px;">05 minutes</span></div>
<div class="th" style="left:1375px;top:959px;width:81px;height:36px;"><span class="b ct" style="left:0px;top:2.5px;line-height:16px;">4 x (Zone 3</span><span class="b ct" style="left:0px;top:17.5px;line-height:16px;">Zone 1)</span></div>
<div class="c Y" style="left:1456px;top:959px;width:115px;height:36px;"><span class="s" style="left:2px;top:2px;line-height:16px;letter-spacing:-0.202px;">4 x (05 minutes</span><span class="s" style="left:2px;top:17px;line-height:16px;letter-spacing:-0.154px;">03 minutes)</span></div>
<div class="th" style="left:1375px;top:995px;width:81px;height:21px;"><span class="b ct" style="left:0px;top:2.5px;line-height:16px;">Zone 2</span></div>
<div class="c G" style="left:1456px;top:995px;width:115px;height:21px;"><span class="s" style="left:2px;top:2px;line-height:16px;letter-spacing:-0.17px;">05 minutes</span></div>
<div class="sb" style="left:1902px;top:854px;width:17px;height:162px;"></div>
<div class="tri" style="left:1907.0px;top:860.5px;border-left:4px solid transparent;border-right:4px solid transparent;border-bottom:4px solid #505050"></div>
<div class="tri" style="left:1907.0px;top:1005.5px;border-left:4px solid transparent;border-right:4px solid transparent;border-top:4px solid #505050"></div>
<div class="thumb" style="left:1903px;top:873px;width:15px;height:94px;"></div>
<div style="left:1907.0px;top:916.0px;width:8px;height:1px;background:#606060;box-shadow:0 1px 0 #fff"></div>
<div style="left:1907.0px;top:919.0px;width:8px;height:1px;background:#606060;box-shadow:0 1px 0 #fff"></div>
<div style="left:1907.0px;top:922.0px;width:8px;height:1px;background:#606060;box-shadow:0 1px 0 #fff"></div></div></div>
<div style="left:1382px;top:834px;width:20px;height:1px;background:#de5a5a;border-radius:1px 1px 0 0;opacity:.85"></div><svg viewBox="0 0 22 17" preserveAspectRatio="none" width="22" height="17" style="position:absolute;left:1381px;top:836px"><defs><linearGradient id="rg7" x1="0" y1="0" x2="0" y2="1"><stop offset="0" stop-color="#a30606"/><stop offset="1" stop-color="#6a0008"/></linearGradient></defs><rect width="22" height="17" rx="1.2" fill="url(#rg7)"/><g fill="#fff"><circle cx="12.65" cy="1.5" r="1.05"/><path d="M12 2.500L10.600 3.200L9 4.600L9.300 6.600L9.900 6.500L9.800 5L10.900 4.200L11 8L10.800 9.400L9.600 11L7 10.400L5.200 10.900L5 11.600L5.800 11.800L7.200 11.400L10 12.200L12.200 10.200L13.500 12.200L14.300 14.900L16.600 15.900L16.800 15.200L15.300 14.400L14.800 12L13.700 9L13.800 5.200L15.800 5.900L16 5.200L14.200 4.200L13.600 3L13 2.500Z"/></g></svg>
</body></html>
